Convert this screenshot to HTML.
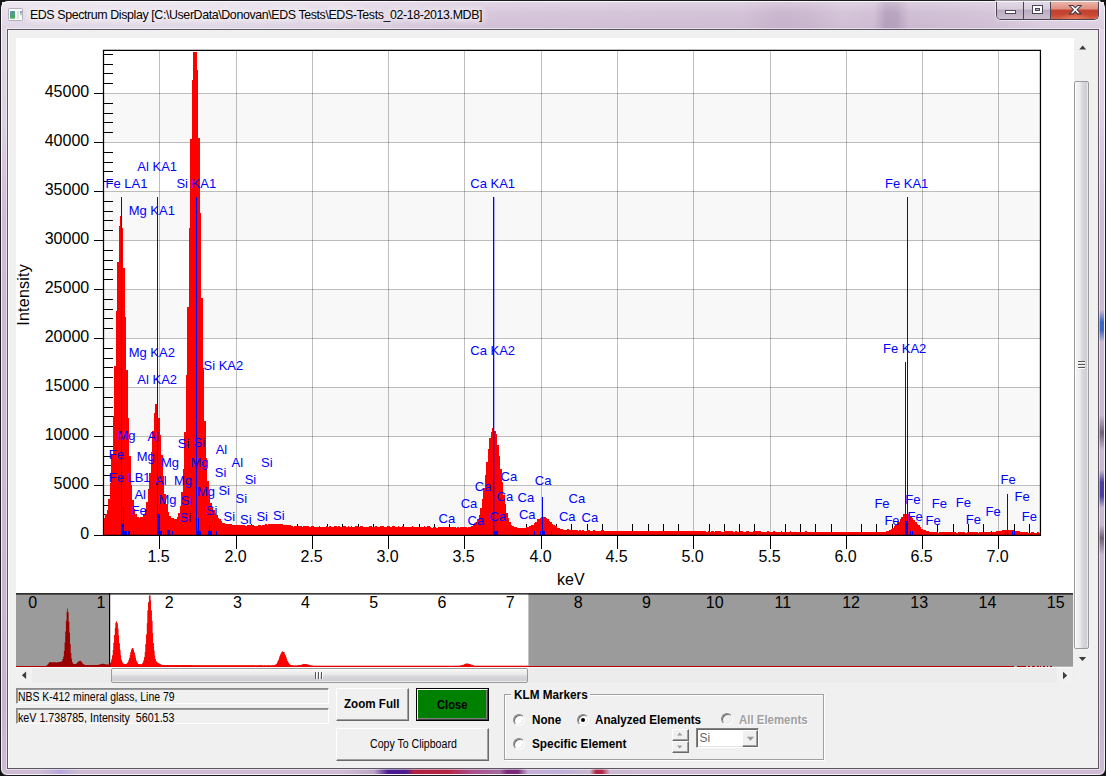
<!DOCTYPE html>
<html lang="en">
<head>
<meta charset="utf-8">
<title>EDS Spectrum Display</title>
<style>
html,body{margin:0;padding:0;}
body{width:1106px;height:776px;overflow:hidden;background:#141414;position:relative;
  font-family:"Liberation Sans",Arial,sans-serif;font-size:11px;color:#000;}
.abs{position:absolute;box-sizing:border-box;}
#frame{left:0;top:0;width:1106px;height:776px;border-radius:8px 8px 7px 7px;
  background:linear-gradient(180deg,#e3d8e7 0px,#ddd0e2 120px,#cdbbd3 220px,#cbb9d1 500px,#c6b3cc 700px,#cdbcd3 776px);
  border:1px solid #1b1a1f;overflow:hidden;}
#frame:before{content:"";position:absolute;left:0;top:0;right:0;bottom:0;border:1px solid rgba(255,255,255,.8);border-radius:7px 7px 6px 6px;z-index:3}
#tbar{left:2px;top:2px;width:1102px;height:27px;
  background:linear-gradient(90deg,#e7deea 0px,#e9e1ed 150px,#e3d8e7 330px,#d8c8dc 490px,#d4c3d8 740px,#cbb8d0 775px,#cdbbd2 808px,#d6c6da 842px,#d2c1d7 872px,#b9a4c0 884px,#bba6c2 895px,#d0bfd5 907px,#d6c6da 990px,#dfd3e3 1040px,#e2d7e6 1102px);}
#tbar:after{content:"";position:absolute;left:0;top:0;right:0;bottom:0;background:linear-gradient(180deg,rgba(255,255,255,.25) 0,rgba(255,255,255,0) 40%,rgba(90,60,100,.05) 100%);}
#rstrip{left:1099px;top:30px;width:5px;height:739px;
  background:linear-gradient(180deg,rgba(0,0,0,0) 280px,#3a66c4 292px,#3a66c4 300px,rgba(0,0,0,0) 312px,rgba(0,0,0,0) 385px,#6d6275 403px,rgba(0,0,0,0) 420px,rgba(0,0,0,0) 440px,#4a3fa0 452px,#4a3fa0 466px,rgba(0,0,0,0) 478px,rgba(0,0,0,0) 495px,#6b6170 508px,rgba(0,0,0,0) 525px);}
#bottomglow{left:2px;top:769px;width:1102px;height:5px;
  background:linear-gradient(90deg,rgba(0,0,0,0) 40px,#b4a6dc 58px,rgba(0,0,0,0) 76px,rgba(0,0,0,0) 340px,#bda6c6 372px,#4a1a90 386px,#4a1a90 404px,#b02040 412px,#b52343 446px,#a8508c 470px,#a66a9e 498px,#7a2a78 505px,#7a2a78 516px,#c4b0d4 526px,#bfb0d8 560px,#cbb9d1 588px,#b02848 594px,#b02848 600px,#cbb9d1 608px,rgba(0,0,0,0) 640px);}
#title{left:29.9px;top:6.5px;height:16px;line-height:16px;font-size:12.4px;white-space:nowrap;color:#000;letter-spacing:-0.385px;
  text-shadow:0 0 6px #fff,0 0 8px #fff,0 0 10px rgba(255,255,255,.9);}
#client{left:7px;top:29px;width:1092px;height:740px;background:#f0f0f0;border:1px solid #5d5664;box-shadow:0 0 0 1px rgba(255,255,255,.5),inset 1px 0 0 #fbfbfb;}
#pic{left:16px;top:38px;width:1058px;height:556px;background:#fff;}
svg.chart{position:absolute;left:0;top:0;}
/* caption buttons */
#cap{left:996px;top:1px;width:103px;height:19px;border:1px solid #4b4353;border-top:none;border-radius:0 0 5px 5px;overflow:hidden;
  box-shadow:0 0 0 1px rgba(255,255,255,.5);}
#cap div{position:absolute;top:0;height:18px;box-sizing:border-box;}
#bmin{left:0;width:27px;background:linear-gradient(#e4dbe7 0,#d8cddc 45%,#b9acc0 50%,#cbbfd0 100%);border-right:1px solid #4b4353;}
#bmax{left:27px;width:27px;background:linear-gradient(#e4dbe7 0,#d8cddc 45%,#b9acc0 50%,#cbbfd0 100%);border-right:1px solid #4b4353;}
#bclose{left:54px;width:47px;background:radial-gradient(ellipse 16px 7px at 50% 100%,rgba(255,150,110,.55),rgba(255,150,110,0)),linear-gradient(#ecb9ae 0,#e08e80 45%,#c2412e 50%,#c64630 75%,#d4644a 100%);}
/* scrollbars */
.sb{background:#f0f0f0;}
.thumbv{background:linear-gradient(90deg,#f6f6f6 0,#ebebec 40%,#d9d9dd 55%,#cbcbd0 100%);border:1px solid #9a9a9a;border-radius:2px;box-shadow:inset 1px 0 0 #fff,inset -1px 0 0 rgba(255,255,255,.6);}
.thumbh{background:linear-gradient(#f6f6f6 0,#ebebec 40%,#d9d9dd 55%,#cbcbd0 100%);border:1px solid #9a9a9a;border-radius:2px;box-shadow:inset 0 1px 0 #fff,inset 0 -1px 0 rgba(255,255,255,.6);}
.sunk{border:1px solid;border-color:#8a8a8a #fff #fff #8a8a8a;box-shadow:inset 1px 1px 0 #9a9a9a;background:#f0f0f0;white-space:pre;}
.btn{background:#f0f0f0;border:1px solid;border-color:#fff #696969 #696969 #fff;box-shadow:inset -1px -1px 0 #a0a0a0;text-align:center;white-space:nowrap;}
.b{font-weight:bold;}
.radio{width:12px;height:12px;border-radius:50%;background:#fff;border:1px solid;border-color:#8c8c8c #fdfdfd #fdfdfd #8c8c8c;box-shadow:inset 1px 1px 0 #6a6a6a,inset -1px -1px 0 #e6e6e6;}
.t{position:absolute;display:inline-block;white-space:pre;font-size:12px;height:14px;line-height:14px;transform-origin:0 50%;}
</style>
</head>
<body>
<div id="frame" class="abs"></div>
<div id="tbar" class="abs"></div>
<div id="rstrip" class="abs"></div>
<div id="bottomglow" class="abs"></div>
<!-- title bar -->
<svg class="abs" style="left:8px;top:8px" width="15" height="13" viewBox="0 0 15 13">
  <rect x="0.5" y="0.5" width="14" height="12" rx="0.8" fill="#fbfbfc" stroke="#b4b0bb"/>
  <defs><linearGradient id="ig" x1="0" y1="0" x2="0.6" y2="1"><stop offset="0" stop-color="#6f94c8"/><stop offset="0.45" stop-color="#4f9a8c"/><stop offset="1" stop-color="#4fae5e"/></linearGradient></defs>
  <rect x="2" y="3" width="5" height="7.7" fill="url(#ig)"/>
  <rect x="8.8" y="3" width="2.2" height="8" fill="#e2e2e2"/>
  <rect x="12" y="3" width="2" height="2.5" fill="#7fa3d3"/>
  <rect x="12" y="5.3" width="2" height="2" fill="#a9d9a0"/>
</svg>
<div id="title" class="abs">EDS Spectrum Display [C:\UserData\Donovan\EDS Tests\EDS-Tests_02-18-2013.MDB]</div>
<div id="cap" class="abs">
  <div id="bmin"><svg width="26" height="18"><rect x="8.5" y="9.5" width="10" height="3" fill="#fff" stroke="#4a4458"/></svg></div>
  <div id="bmax"><svg width="26" height="18"><rect x="8.5" y="4.5" width="10" height="8" fill="#fff" stroke="#4a4458"/><rect x="11.5" y="7.5" width="4" height="2" fill="#b9acc0" stroke="#4a4458"/></svg></div>
  <div id="bclose"><svg width="47" height="18"><path d="M18.5 4.5h3.6l2.2 2.3 2.2-2.3h3.6l-3.9 4.2 3.9 4.2h-3.6l-2.2-2.3-2.2 2.3h-3.6l3.9-4.2z" fill="#fff" stroke="#4a3a48" stroke-width="1.1"/></svg></div>
</div>
<div id="client" class="abs"></div>
<div id="pic" class="abs"></div>
<svg class="chart" width="1106" height="776" viewBox="0 0 1106 776">
<rect x="103.5" y="485.5" width="936.95" height="49" fill="#f8f8f8"/>
<rect x="103.5" y="387.5" width="936.95" height="49" fill="#f8f8f8"/>
<rect x="103.5" y="289.5" width="936.95" height="49" fill="#f8f8f8"/>
<rect x="103.5" y="191.5" width="936.95" height="49" fill="#f8f8f8"/>
<rect x="103.5" y="93.5" width="936.95" height="49" fill="#f8f8f8"/>
<path d="M103.5 485.5H1040.45M103.5 436.5H1040.45M103.5 387.5H1040.45M103.5 338.5H1040.45M103.5 289.5H1040.45M103.5 240.5H1040.45M103.5 191.5H1040.45M103.5 142.5H1040.45M103.5 93.5H1040.45" stroke="#000" stroke-opacity="0.25" stroke-width="1" fill="none" shape-rendering="crispEdges"/>
<path d="M159.5 50.4V535.35M236.5 50.4V535.35M312.5 50.4V535.35M388.5 50.4V535.35M464.5 50.4V535.35M541.5 50.4V535.35M617.5 50.4V535.35M693.5 50.4V535.35M770.5 50.4V535.35M846.5 50.4V535.35M922.5 50.4V535.35M998.5 50.4V535.35" stroke="#000" stroke-opacity="0.25" stroke-width="1" fill="none" shape-rendering="crispEdges"/>
<path d="M94 535.5H103.5M103.5 524.5H113M103.5 514.5H113M103.5 505.5H113M103.5 495.5H113M94 485.5H103.5M103.5 475.5H113M103.5 465.5H113M103.5 456.5H113M103.5 446.5H113M94 436.5H103.5M103.5 426.5H113M103.5 416.5H113M103.5 407.5H113M103.5 397.5H113M94 387.5H103.5M103.5 377.5H113M103.5 367.5H113M103.5 358.5H113M103.5 348.5H113M94 338.5H103.5M103.5 328.5H113M103.5 318.5H113M103.5 309.5H113M103.5 299.5H113M94 289.5H103.5M103.5 279.5H113M103.5 269.5H113M103.5 260.5H113M103.5 250.5H113M94 240.5H103.5M103.5 230.5H113M103.5 220.5H113M103.5 211.5H113M103.5 201.5H113M94 191.5H103.5M103.5 181.5H113M103.5 171.5H113M103.5 162.5H113M103.5 152.5H113M94 142.5H103.5M103.5 132.5H113M103.5 122.5H113M103.5 113.5H113M103.5 103.5H113M94 93.5H103.5M103.5 83.5H113M103.5 73.5H113M103.5 64.5H113M103.5 54.5H113M114.5 535.35V524M129.5 535.35V524M144.5 535.35V524M159.5 535.35V549M175.5 535.35V524M190.5 535.35V524M205.5 535.35V524M220.5 535.35V524M236.5 535.35V549M251.5 535.35V524M266.5 535.35V524M281.5 535.35V524M297.5 535.35V524M312.5 535.35V549M327.5 535.35V524M342.5 535.35V524M358.5 535.35V524M373.5 535.35V524M388.5 535.35V549M403.5 535.35V524M419.5 535.35V524M434.5 535.35V524M449.5 535.35V524M464.5 535.35V549M480.5 535.35V524M495.5 535.35V524M510.5 535.35V524M526.5 535.35V524M541.5 535.35V549M556.5 535.35V524M571.5 535.35V524M587.5 535.35V524M602.5 535.35V524M617.5 535.35V549M632.5 535.35V524M648.5 535.35V524M663.5 535.35V524M678.5 535.35V524M693.5 535.35V549M709.5 535.35V524M724.5 535.35V524M739.5 535.35V524M754.5 535.35V524M770.5 535.35V549M785.5 535.35V524M800.5 535.35V524M815.5 535.35V524M831.5 535.35V524M846.5 535.35V549M861.5 535.35V524M876.5 535.35V524M892.5 535.35V524M907.5 535.35V524M922.5 535.35V549M937.5 535.35V524M953.5 535.35V524M968.5 535.35V524M983.5 535.35V524M998.5 535.35V549M1014.5 535.35V524M1029.5 535.35V524" stroke="#000" stroke-width="1" fill="none" shape-rendering="crispEdges"/>
<path d="M103.5 535.85V50.4H1040.45V535.85" stroke="#000" stroke-width="1.25" fill="none"/>
<path d="M104 534.9V517.92H104.98V514.49H106.51V509.86H108.03V499.29H109.56V482.52H111.09V455.44H112.61V416.38H114.14V366H115.66V311.23H117.19V261.99H118.71V225.87H120.24V216.2H121.76V227.93H123.29V268.06H124.81V316.52H126.34V369.73H127.87V418.28H129.39V456.18H130.92V485.31H132.44V500.3H133.97V509.44H135.49V514.35H137.02V517.37H138.54V517.64H140.07V517H141.59V517.47H143.12V514.34H144.65V509.39H146.17V502.27H147.7V488.95H149.22V472.99H150.75V452.3H152.27V431.41H153.8V413.21H155.32V404.3H156.85V404.24H158.37V417.51H159.9V435.01H161.43V455.34H162.95V475.95H164.48V493.63H166V504.09H167.53V512.05H169.05V515.8H170.58V517.89H172.1V518.34H173.63V518.84H175.15V519.05H176.68V517.29H178.21V512.9H179.73V506.26H181.26V491.85H182.78V468.71H184.31V431.99H185.83V375.44H187.36V307.28H188.88V228.15H190.41V139.05H191.93V80.02H193.46V52.1H194.99V52.1H196.51V69.93H198.04V138H199.56V212.84H201.09V297.82H202.61V368.01H204.14V421.12H205.66V457.56H207.19V481.36H208.71V494.42H210.24V502.54H211.77V506.73H213.29V510.33H214.82V512.66H216.34V514.84H217.87V517.62H219.39V519.37H220.92V521.41H222.44V522.62H223.97V523.26H225.49V523.92H227.02V524.06H228.55V524.45H230.07V524.15H231.6V524.92H233.12V525.05H234.65V525.42H236.17V525.17H237.7V525H239.22V525.48H240.75V525.3H242.27V525.09H243.8V525.38H245.33V525.52H246.85V525.09H248.38V525.38H249.9V525.3H251.43V525.08H252.95V525.08H254.48V525.51H256V525.53H257.53V525.22H259.05V525.25H260.58V525.67H262.11V524.53H263.63V524.73H265.16V524.29H266.68V524.69H268.21V523.68H269.73V524.1H271.26V523.79H272.78V524.13H274.31V523.7H275.83V523.77H277.36V523.88H278.89V523.86H280.41V524.21H281.94V524.18H283.46V524.92H284.99V525.35H286.51V525.3H288.04V525.33H289.56V525.35H291.09V525.64H292.61V526.54H294.14V526.01H295.67V525.78H297.19V526.26H298.72V526.48H300.24V526.28H301.77V526.56H303.29V526.26H304.82V526.48H306.34V526.11H307.87V526.4H309.39V526.78H310.92V526.43H312.45V526.35H313.97V526.77H315.5V526.73H317.02V527.26H318.55V526.34H320.07V526.76H321.6V527.19H323.12V527.09H324.65V526.64H326.17V526.35H327.7V526.59H329.22V526.43H330.75V526.87H332.28V526.94H333.8V526.29H335.33V526.4H336.85V526.55H338.38V526.17H339.9V526.8H341.43V526.64H342.95V526.22H344.48V525.99H346V526.51H347.53V526.02H349.06V526.67H350.58V526.4H352.11V526.54H353.63V526.94H355.16V526.41H356.68V526.21H358.21V526.51H359.73V526.48H361.26V526.06H362.78V526.81H364.31V526.88H365.84V526.63H367.36V526.78H368.89V526.05H370.41V526.34H371.94V526.67H373.46V526.6H374.99V525.59H376.51V526.59H378.04V526.63H379.56V526.31H381.09V526.21H382.62V526.33H384.14V526.65H385.67V526.72H387.19V526.2H388.72V526.4H390.24V526.88H391.77V526.09H393.29V526.22H394.82V526.54H396.34V526.56H397.87V526.44H399.4V526.73H400.92V526.93H402.45V526.48H403.97V527H405.5V526.5H407.02V527.04H408.55V526.68H410.07V526.71H411.6V526.19H413.12V527.02H414.65V527.13H416.18V526.94H417.7V527.09H419.23V526.96H420.75V526.7H422.28V526.62H423.8V526.39H425.33V527.08H426.85V526.16H428.38V526.36H429.9V527H431.43V527.6H432.96V527H434.48V526.98H436.01V527.66H437.53V527.02H439.06V527.12H440.58V527.3H442.11V526.93H443.63V526.84H445.16V527.27H446.68V527.09H448.21V527.35H449.74V527.4H451.26V527.18H452.79V527.07H454.31V527.37H455.84V527.83H457.36V527.07H458.89V527.67H460.41V527.19H461.94V526.72H463.46V527.2H464.99V527.49H466.52V527.5H468.04V526.66H469.57V526.77H471.09V526.2H472.62V525.33H474.14V524.34H475.67V522.34H477.19V519.32H478.72V515.49H480.24V508.14H481.77V498.53H483.3V487.71H484.82V474.79H486.35V461.97H487.87V448.97H489.4V437.51H490.92V431.59H492.45V427.7H493.97V430.51H495.5V433.93H497.02V444.6H498.55V456.43H500.08V468.89H501.6V482.32H503.13V494.8H504.65V504.1H506.18V512.85H507.7V517.62H509.23V521.67H510.75V524.83H512.28V525.53H513.8V527.11H515.33V527.3H516.86V527.91H518.38V527.72H519.91V527.7H521.43V528.25H522.96V528.33H524.48V527.75H526.01V527.13H527.53V526.95H529.06V526.29H530.58V524.99H532.11V524.84H533.64V522.79H535.16V521.58H536.69V519.48H538.21V518.57H539.74V517.71H541.26V516.79H542.79V517.16H544.31V516.96H545.84V518.13H547.36V519.27H548.89V520.9H550.42V521.92H551.94V523.85H553.47V525.08H554.99V526.33H556.52V527.69H558.04V528.09H559.57V528.73H561.09V529.15H562.62V529.6H564.14V529.81H565.67V529.68H567.2V529.49H568.72V530.23H570.25V530.01H571.77V530.25H573.3V530.03H574.82V530.13H576.35V530.02H577.87V530.87H579.4V530.42H580.92V530.53H582.45V530.36H583.98V530.51H585.5V530.52H587.03V530.26H588.55V530.03H590.08V531.04H591.6V530.53H593.13V530.42H594.65V530.51H596.18V530.6H597.7V530.83H599.23V530.76H600.76V530.44H602.28V530.39H603.81V530.61H605.33V530.82H606.86V530.65H608.38V530.74H609.91V530.6H611.43V530.71H612.96V530.88H614.48V530.73H616.01V531.03H617.54V530.64H619.06V530.58H620.59V531.06H622.11V530.75H623.64V531.03H625.16V530.63H626.69V530.67H628.21V530.91H629.74V530.67H631.26V530.96H632.79V531.01H634.31V531H635.84V530.92H637.37V530.97H638.89V530.88H640.42V531.04H641.94V530.78H643.47V530.73H644.99V531.04H646.52V531.23H648.04V530.81H649.57V530.74H651.09V531H652.62V531.23H654.15V530.93H655.67V530.7H657.2V531.37H658.72V530.92H660.25V531.08H661.77V531.19H663.3V530.93H664.82V531.29H666.35V530.99H667.87V530.8H669.4V531.03H670.93V531.24H672.45V531.42H673.98V531.33H675.5V531.45H677.03V530.79H678.55V531.15H680.08V531.31H681.6V531.37H683.13V531.33H684.65V531.2H686.18V531.39H687.71V530.83H689.23V531.3H690.76V531.31H692.28V531.11H693.81V530.9H695.33V530.94H696.86V531.29H698.38V531.16H699.91V531.19H701.43V531.13H702.96V531.19H704.49V531.43H706.01V531.5H707.54V531.24H709.06V531.5H710.59V531.03H712.11V531.29H713.64V531.5H715.16V531.38H716.69V531.42H718.21V531.36H719.74V531.17H721.27V531.63H722.79V531.71H724.32V531.31H725.84V531.42H727.37V531.37H728.89V531.32H730.42V531.45H731.94V531.28H733.47V531.6H734.99V531.43H736.52V531.61H738.05V531.67H739.57V531.36H741.1V531.38H742.62V531.85H744.15V531.71H745.67V531.46H747.2V531.33H748.72V531.65H750.25V531.58H751.77V531.81H753.3V531.11H754.83V531.49H756.35V531.42H757.88V531.47H759.4V531.43H760.93V531.5H762.45V531.68H763.98V531.5H765.5V531.63H767.03V531.42H768.55V531.79H770.08V531.77H771.61V531.56H773.13V531.45H774.66V531.66H776.18V531.82H777.71V531.72H779.23V531.79H780.76V531.37H782.28V531.56H783.81V531.5H785.33V531.67H786.86V531.83H788.39V531.53H789.91V531.45H791.44V531.65H792.96V531.76H794.49V531.57H796.01V531.83H797.54V531.64H799.06V531.91H800.59V531.96H802.11V531.69H803.64V531.74H805.17V531.47H806.69V531.86H808.22V531.81H809.74V532.02H811.27V532.15H812.79V532.14H814.32V531.76H815.84V532.05H817.37V531.66H818.89V531.61H820.42V531.91H821.95V531.58H823.47V531.84H825V531.69H826.52V531.93H828.05V531.73H829.57V532.06H831.1V531.8H832.62V531.99H834.15V531.94H835.67V531.81H837.2V531.9H838.73V531.95H840.25V531.82H841.78V531.81H843.3V532.19H844.83V531.86H846.35V531.85H847.88V532.09H849.4V531.91H850.93V532.2H852.45V531.74H853.98V532.02H855.51V532H857.03V531.79H858.56V532.02H860.08V531.9H861.61V532.18H863.13V532.1H864.66V532.24H866.18V532.04H867.71V531.84H869.23V531.97H870.76V531.86H872.29V532.18H873.81V532.15H875.34V532.07H876.86V531.88H878.39V531.89H879.91V531.91H881.44V531.72H882.96V531.72H884.49V531.5H886.01V530.93H887.54V530.83H889.07V530.01H890.59V528.77H892.12V527.95H893.64V526.31H895.17V524.97H896.69V522.15H898.22V521.58H899.74V519.11H901.27V517.18H902.79V514.44H904.32V513.89H905.85V513.66H907.37V514.26H908.9V514.28H910.42V515.72H911.95V517.8H913.47V520.1H915V522.03H916.52V523.62H918.05V525.49H919.57V527.2H921.1V528.61H922.63V530.05H924.15V530.44H925.68V531.24H927.2V531.44H928.73V531.65H930.25V532.03H931.78V532.2H933.3V531.94H934.83V532.09H936.35V532.28H937.88V532.69H939.4V532.23H940.93V532.13H942.46V532.06H943.98V532.36H945.51V532.36H947.03V532.34H948.56V532.14H950.08V532.47H951.61V532.31H953.13V532.45H954.66V532.26H956.18V532.56H957.71V532.26H959.24V532.4H960.76V532.36H962.29V532.25H963.81V532.15H965.34V532.61H966.86V532.19H968.39V532.26H969.91V532.4H971.44V532.14H972.96V532.33H974.49V532.16H976.02V532.46H977.54V532.5H979.07V532.16H980.59V532H982.12V532.23H983.64V532.16H985.17V532.33H986.69V532.41H988.22V532.15H989.74V531.75H991.27V532.18H992.8V531.78H994.32V531.84H995.85V531.24H997.37V530.85H998.9V531.03H1000.42V530.63H1001.95V530.05H1003.47V530.18H1005V530.32H1006.52V530.29H1008.05V530.46H1009.58V529.94H1011.1V530.41H1012.63V530.23H1014.15V530.51H1015.68V531.06H1017.2V531.29H1018.73V531.29H1020.25V531.63H1021.78V531.81H1023.3V532.3H1024.83V532.02H1026.36V532.41H1027.88V532.71H1029.41V532.52H1030.93V532.4H1032.46V532.18H1033.98V532.58H1035.51V532.74H1037.03V532.23H1038.56V532.54H1039.95V532.61H1039.95V534.9Z" fill="#ff0000" shape-rendering="crispEdges"/>
<g fill="#0000ff">
<rect x="121" y="197" width="1" height="337.9"/>
<rect x="157" y="197" width="1" height="337.9"/>
<rect x="196" y="197" width="1" height="337.9"/>
<rect x="493" y="197" width="1.3" height="337.9"/>
<rect x="907" y="197" width="1" height="337.9"/>
<rect x="905" y="362" width="1" height="172.9"/>
<rect x="542" y="497" width="1" height="37.9"/>
<rect x="1007" y="494" width="1" height="40.9"/>
</g>
<g fill="#0000ff" shape-rendering="crispEdges">
<rect x="122" y="524.2" width="1.1" height="10.7"/>
<rect x="123.1" y="506.8" width="0.8" height="28.1"/>
<rect x="123.9" y="531" width="2.7" height="3.9"/>
<rect x="128.4" y="531" width="1.1" height="3.9"/>
<rect x="132.9" y="531" width="0.9" height="3.9"/>
<rect x="157.8" y="514.1" width="2.1" height="20.8"/>
<rect x="159.9" y="531" width="1.9" height="3.9"/>
<rect x="165.1" y="531" width="0.9" height="3.9"/>
<rect x="167.3" y="530.4" width="2.7" height="4.5"/>
<rect x="171.6" y="531" width="1.3" height="3.9"/>
<rect x="196.9" y="531" width="4" height="3.9"/>
<rect x="198.2" y="518" width="0.9" height="16.9"/>
<rect x="208" y="531" width="4" height="3.9"/>
<rect x="209.4" y="525.3" width="0.9" height="9.6"/>
<rect x="216.1" y="531" width="0.9" height="3.9"/>
<rect x="493.2" y="531.3" width="4.6" height="3.6"/>
<rect x="533.6" y="531" width="1" height="3.9"/>
<rect x="539.6" y="531" width="1.2" height="3.9"/>
<rect x="541.5" y="531" width="3.3" height="3.9"/>
<rect x="551.1" y="531" width="1" height="3.9"/>
<rect x="906.4" y="521" width="0.9" height="13.9"/>
<rect x="909.8" y="531.3" width="1.2" height="3.6"/>
<rect x="911.6" y="531.3" width="1.4" height="3.6"/>
<rect x="991" y="531.3" width="1" height="3.6"/>
<rect x="1005.2" y="531.3" width="1" height="3.6"/>
<rect x="1012.2" y="531.3" width="1.1" height="3.6"/>
<rect x="1013.9" y="531.3" width="1.1" height="3.6"/>
</g>
<path d="M102.9 535.35H1041.05" stroke="#000" stroke-width="1.1" fill="none"/>
<g font-family="Liberation Sans, Arial, sans-serif" font-size="16" fill="#000">
<text x="89.2" y="538.9" text-anchor="end">0</text>
<text x="89.2" y="488.9" text-anchor="end">5000</text>
<text x="89.2" y="439.9" text-anchor="end">10000</text>
<text x="89.2" y="390.9" text-anchor="end">15000</text>
<text x="89.2" y="341.9" text-anchor="end">20000</text>
<text x="89.2" y="292.9" text-anchor="end">25000</text>
<text x="89.2" y="243.9" text-anchor="end">30000</text>
<text x="89.2" y="194.9" text-anchor="end">35000</text>
<text x="89.2" y="145.9" text-anchor="end">40000</text>
<text x="89.2" y="96.9" text-anchor="end">45000</text>
<text x="158.6" y="561.7" text-anchor="middle">1.5</text>
<text x="235.6" y="561.7" text-anchor="middle">2.0</text>
<text x="311.6" y="561.7" text-anchor="middle">2.5</text>
<text x="387.6" y="561.7" text-anchor="middle">3.0</text>
<text x="463.6" y="561.7" text-anchor="middle">3.5</text>
<text x="540.6" y="561.7" text-anchor="middle">4.0</text>
<text x="616.6" y="561.7" text-anchor="middle">4.5</text>
<text x="692.6" y="561.7" text-anchor="middle">5.0</text>
<text x="769.6" y="561.7" text-anchor="middle">5.5</text>
<text x="845.6" y="561.7" text-anchor="middle">6.0</text>
<text x="921.6" y="561.7" text-anchor="middle">6.5</text>
<text x="997.6" y="561.7" text-anchor="middle">7.0</text>
<text x="570.8" y="584.7" text-anchor="middle">keV</text>
<text transform="translate(29.1 294.9) rotate(-90)" text-anchor="middle" letter-spacing="0.22">Intensity</text>
</g>
<g font-family="Liberation Sans, Arial, sans-serif" font-size="13" fill="#0000ff">
<text x="137.3" y="170.7">Al KA1</text>
<text x="105.5" y="187.6">Fe LA1</text>
<text x="176.4" y="187.6">Si KA1</text>
<text x="128.7" y="214.7">Mg KA1</text>
<text x="470.3" y="187.6">Ca KA1</text>
<text x="885" y="187.6">Fe KA1</text>
<text x="128.7" y="357">Mg KA2</text>
<text x="137.3" y="384">Al KA2</text>
<text x="203.5" y="370">Si KA2</text>
<text x="470.3" y="355">Ca KA2</text>
<text x="883" y="353">Fe KA2</text>
<text x="117.5" y="440">Mg</text>
<text x="147.4" y="441">Al</text>
<text x="177.8" y="448">Si</text>
<text x="193.5" y="447">Si</text>
<text x="215.7" y="454.4">Al</text>
<text x="108.7" y="459">Fe</text>
<text x="136.7" y="461">Mg</text>
<text x="161" y="467">Mg</text>
<text x="190.4" y="467">Mg</text>
<text x="231.5" y="466.7">Al</text>
<text x="261" y="466.7">Si</text>
<text x="214.8" y="477">Si</text>
<text x="108.7" y="482.4">Fe LB1</text>
<text x="155" y="485">Al</text>
<text x="174" y="484.7">Mg</text>
<text x="244.7" y="484.4">Si</text>
<text x="134.4" y="498.5">Al</text>
<text x="197" y="496">Mg</text>
<text x="218.4" y="495">Si</text>
<text x="158.4" y="503.5">Mg</text>
<text x="180.8" y="505">Si</text>
<text x="235.6" y="503">Si</text>
<text x="131.6" y="515.3">Fe</text>
<text x="205.8" y="515.3">Si</text>
<text x="179.6" y="521.8">Si</text>
<text x="223.5" y="520.5">Si</text>
<text x="240" y="524">Si</text>
<text x="256.4" y="520.5">Si</text>
<text x="273" y="520">Si</text>
<text x="438.6" y="523">Ca</text>
<text x="460.7" y="508.1">Ca</text>
<text x="467.6" y="525.1">Ca</text>
<text x="474.8" y="491.3">Ca</text>
<text x="489.6" y="520.8">Ca</text>
<text x="500.5" y="481.4">Ca</text>
<text x="496.5" y="501.3">Ca</text>
<text x="517.6" y="502.2">Ca</text>
<text x="518.9" y="519.3">Ca</text>
<text x="534.8" y="485">Ca</text>
<text x="558.9" y="520.8">Ca</text>
<text x="568.6" y="503">Ca</text>
<text x="581.5" y="522">Ca</text>
<text x="874.4" y="508.4">Fe</text>
<text x="884.4" y="525">Fe</text>
<text x="905.2" y="504.2">Fe</text>
<text x="907.5" y="521.4">Fe</text>
<text x="925.6" y="525">Fe</text>
<text x="931.7" y="508.4">Fe</text>
<text x="955.8" y="507.3">Fe</text>
<text x="965.7" y="524">Fe</text>
<text x="985.6" y="516">Fe</text>
<text x="1000.6" y="484.3">Fe</text>
<text x="1014.6" y="501.1">Fe</text>
<text x="1021.8" y="520.8">Fe</text>
</g>
<rect x="16" y="593.3" width="1057" height="73.4" fill="#9b9b9b"/>
<rect x="109.6" y="593.3" width="418.8" height="73.4" fill="#fff"/>
<clipPath id="cw"><rect x="109.6" y="593.3" width="418.8" height="80"/></clipPath>
<path d="M16 666.7V666.7H15.57V666.7H16.25V666.7H16.93V666.7H17.61V666.7H18.29V666.7H18.97V666.7H19.65V666.7H20.33V666.7H21.01V666.7H21.69V666.7H22.37V666.7H23.05V666.7H23.73V666.7H24.41V666.7H25.1V666.7H25.78V666.7H26.46V666.7H27.14V666.7H27.82V666.7H28.5V666.7H29.18V666.7H29.86V666.7H30.54V666.7H31.22V666.7H31.9V666.7H32.58V666.7H33.26V666.7H33.94V666.7H34.62V666.7H35.3V666.7H35.98V666.7H36.66V666.7H37.34V666.7H38.02V666.7H38.71V666.7H39.39V666.7H40.07V666.7H40.75V666.7H41.43V666.7H42.11V666.7H42.79V666.7H43.47V666.7H44.15V666.7H44.83V666.7H45.51V666.46H46.19V665.85H46.87V664.92H47.55V664.18H48.23V663.4H48.91V662.59H49.59V662.3H50.27V662.12H50.95V662.14H51.63V662.2H52.32V662.24H53V662.36H53.68V662.24H54.36V662.31H55.04V662.24H55.72V662.39H56.4V662.48H57.08V662.27H57.76V662.05H58.44V662.13H59.12V662.08H59.8V661.99H60.48V661.81H61.16V661.41H61.84V660.77H62.52V659.08H63.2V656.39H63.88V651H64.56V642.43H65.24V631.59H65.93V620.7H66.61V611.86H67.29V608.57H67.97V612.35H68.65V621.79H69.33V632.87H70.01V644.07H70.69V652.95H71.37V658.82H72.05V661.9H72.73V663.46H73.41V664.08H74.09V664.17H74.77V664.09H75.45V663.88H76.13V663.43H76.81V662.79H77.49V662.1H78.17V661.4H78.85V660.94H79.54V660.72H80.22V660.75H80.9V661.46H81.58V662.34H82.26V663.16H82.94V663.89H83.62V664.36H84.3V664.73H84.98V665.03H85.66V665.04H86.34V665.13H87.02V665.06H87.7V665.12H88.38V665.05H89.06V665.15H89.74V665.13H90.42V665.1H91.1V665.06H91.78V665.08H92.46V665.16H93.15V665.08H93.83V665.06H94.51V665.06H95.19V665.04H95.87V664.9H96.55V664.96H97.23V664.93H97.91V664.77H98.59V664.68H99.27V664.53H99.95V664.29H100.63V664.09H101.31V663.92H101.99V663.75H102.67V663.76H103.35V663.87H104.03V663.97H104.71V664.13H105.39V664.23H106.07V664.41H106.76V664.5H107.44V664.39H108.12V664.41H108.8V664.29H109.48V663.8H110.16V663.15H110.84V661.65H111.52V659.27H112.2V655.43H112.88V649.88H113.56V642.73H114.24V634.96H114.92V627.98H115.6V622.85H116.28V621.48H116.96V623.14H117.64V628.84H118.32V635.71H119V643.26H119.68V650.15H120.37V655.53H121.05V659.66H121.73V661.79H122.41V663.09H123.09V663.78H123.77V664.21H124.45V664.25H125.13V664.16H125.81V664.23H126.49V663.78H127.17V663.08H127.85V662.07H128.53V660.18H129.21V657.92H129.89V654.98H130.57V652.02H131.25V649.43H131.93V648.17H132.61V648.16H133.29V650.04H133.98V652.53H134.66V655.41H135.34V658.34H136.02V660.84H136.7V662.33H137.38V663.46H138.06V663.99H138.74V664.29H139.42V664.35H140.1V664.42H140.78V664.45H141.46V664.2H142.14V663.58H142.82V662.64H143.5V660.59H144.18V657.31H144.86V652.1H145.54V644.07H146.22V634.4H146.9V623.17H147.59V610.53H148.27V602.16H148.95V595.86H149.63V595.47H150.31V600.72H150.99V610.38H151.67V621H152.35V633.06H153.03V643.02H153.71V650.56H154.39V655.73H155.07V659.1H155.75V660.96H156.43V662.11H157.11V662.7H157.79V663.21H158.47V663.54H159.15V663.85H159.83V664.25H160.51V664.5H161.2V664.79H161.88V664.96H162.56V665.05H163.24V665.14H163.92V665.16H164.6V665.22H165.28V665.18H165.96V665.28H166.64V665.3H167.32V665.36H168V665.32H168.68V665.3H169.36V665.36H170.04V665.34H170.72V665.31H171.4V665.35H172.08V665.37H172.76V665.31H173.44V665.35H174.12V665.34H174.81V665.31H175.49V665.31H176.17V665.37H176.85V665.37H177.53V665.33H178.21V665.33H178.89V665.39H179.57V665.23H180.25V665.26H180.93V665.2H181.61V665.25H182.29V665.11H182.97V665.17H183.65V665.12H184.33V665.17H185.01V665.11H185.69V665.12H186.37V665.14H187.05V665.13H187.73V665.18H188.42V665.18H189.1V665.28H189.78V665.35H190.46V665.34H191.14V665.34H191.82V665.34H192.5V665.39H193.18V665.51H193.86V665.44H194.54V665.41H195.22V665.47H195.9V665.5H196.58V665.48H197.26V665.52H197.94V665.47H198.62V665.51H199.3V665.45H199.98V665.49H200.66V665.55H201.34V665.5H202.03V665.49H202.71V665.55H203.39V665.54H204.07V665.62H204.75V665.49H205.43V665.54H206.11V665.61H206.79V665.59H207.47V665.53H208.15V665.49H208.83V665.52H209.51V665.5H210.19V665.56H210.87V665.57H211.55V665.48H212.23V665.49H212.91V665.51H213.59V665.46H214.27V665.55H214.95V665.53H215.64V665.47H216.32V665.44H217V665.51H217.68V665.44H218.36V665.53H219.04V665.49H219.72V665.51H220.4V665.57H221.08V665.49H221.76V665.47H222.44V665.51H223.12V665.51H223.8V665.45H224.48V665.55H225.16V665.56H225.84V665.53H226.52V665.55H227.2V665.44H227.88V665.49H228.56V665.53H229.25V665.52H229.93V665.38H230.61V665.52H231.29V665.53H231.97V665.48H232.65V665.47H233.33V665.48H234.01V665.53H234.69V665.54H235.37V665.47H236.05V665.49H236.73V665.56H237.41V665.45H238.09V665.47H238.77V665.51H239.45V665.52H240.13V665.5H240.81V665.54H241.49V665.57H242.17V665.5H242.86V665.58H243.54V665.51H244.22V665.58H244.9V665.53H245.58V665.54H246.26V665.46H246.94V665.58H247.62V665.6H248.3V665.57H248.98V665.59H249.66V665.57H250.34V665.54H251.02V665.53H251.7V665.49H252.38V665.59H253.06V665.46H253.74V665.49H254.42V665.58H255.1V665.66H255.78V665.58H256.47V665.58H257.15V665.67H257.83V665.58H258.51V665.6H259.19V665.62H259.87V665.57H260.55V665.56H261.23V665.62H261.91V665.59H262.59V665.63H263.27V665.64H263.95V665.6H264.63V665.59H265.31V665.63H265.99V665.7H266.67V665.59H267.35V665.67H268.03V665.61H268.71V665.54H269.39V665.61H270.08V665.65H270.76V665.65H271.44V665.53H272.12V665.55H272.8V665.46H273.48V665.34H274.16V665.2H274.84V664.92H275.52V664.49H276.2V663.95H276.88V662.9H277.56V661.54H278.24V660H278.92V658.17H279.6V656.35H280.28V654.51H280.96V652.88H281.64V652.04H282.32V651.49H283V651.89H283.69V652.37H284.37V653.89H285.05V655.57H285.73V657.33H286.41V659.24H287.09V661.01H287.77V662.33H288.45V663.57H289.13V664.25H289.81V664.82H290.49V665.27H291.17V665.37H291.85V665.59H292.53V665.62H293.21V665.71H293.89V665.68H294.57V665.68H295.25V665.76H295.93V665.77H296.61V665.69H297.3V665.6H297.98V665.57H298.66V665.48H299.34V665.29H300.02V665.27H300.7V664.98H301.38V664.81H302.06V664.51H302.74V664.38H303.42V664.26H304.1V664.13H304.78V664.18H305.46V664.15H306.14V664.32H306.82V664.48H307.5V664.71H308.18V664.86H308.86V665.13H309.54V665.31H310.22V665.48H310.91V665.68H311.59V665.73H312.27V665.82H312.95V665.88H313.63V665.95H314.31V665.98H314.99V665.96H315.67V665.93H316.35V666.04H317.03V666.01H317.71V666.04H318.39V666.01H319.07V666.02H319.75V666.01H320.43V666.13H321.11V666.06H321.79V666.08H322.47V666.06H323.15V666.08H323.83V666.08H324.52V666.04H325.2V666.01H325.88V666.15H326.56V666.08H327.24V666.06H327.92V666.08H328.6V666.09H329.28V666.12H329.96V666.11H330.64V666.07H331.32V666.06H332V666.09H332.68V666.12H333.36V666.1H334.04V666.11H334.72V666.09H335.4V666.11H336.08V666.13H336.76V666.11H337.44V666.15H338.13V666.1H338.81V666.09H339.49V666.15H340.17V666.11H340.85V666.15H341.53V666.09H342.21V666.1H342.89V666.13H343.57V666.1H344.25V666.14H344.93V666.15H345.61V666.15H346.29V666.14H346.97V666.14H347.65V666.13H348.33V666.15H349.01V666.11H349.69V666.11H350.37V666.15H351.05V666.18H351.74V666.12H352.42V666.11H353.1V666.15H353.78V666.18H354.46V666.14H355.14V666.1H355.82V666.2H356.5V666.13H357.18V666.16H357.86V666.17H358.54V666.14H359.22V666.19H359.9V666.14H360.58V666.12H361.26V666.15H361.94V666.18H362.62V666.21H363.3V666.19H363.98V666.21H364.66V666.12H365.35V666.17H366.03V666.19H366.71V666.2H367.39V666.19H368.07V666.17H368.75V666.2H369.43V666.12H370.11V666.19H370.79V666.19H371.47V666.16H372.15V666.13H372.83V666.14H373.51V666.19H374.19V666.17H374.87V666.17H375.55V666.16H376.23V666.17H376.91V666.21H377.59V666.22H378.27V666.18H378.96V666.22H379.64V666.15H380.32V666.19H381V666.22H381.68V666.2H382.36V666.21H383.04V666.2H383.72V666.17H384.4V666.24H385.08V666.25H385.76V666.19H386.44V666.21H387.12V666.2H387.8V666.19H388.48V666.21H389.16V666.19H389.84V666.23H390.52V666.21H391.2V666.23H391.88V666.24H392.57V666.2H393.25V666.2H393.93V666.27H394.61V666.25H395.29V666.21H395.97V666.19H396.65V666.24H397.33V666.23H398.01V666.26H398.69V666.16H399.37V666.22H400.05V666.21H400.73V666.21H401.41V666.21H402.09V666.22H402.77V666.24H403.45V666.22H404.13V666.24H404.81V666.21H405.49V666.26H406.18V666.26H406.86V666.23H407.54V666.21H408.22V666.24H408.9V666.26H409.58V666.25H410.26V666.26H410.94V666.2H411.62V666.23H412.3V666.22H412.98V666.24H413.66V666.26H414.34V666.22H415.02V666.21H415.7V666.24H416.38V666.25H417.06V666.23H417.74V666.26H418.42V666.24H419.1V666.28H419.79V666.28H420.47V666.25H421.15V666.25H421.83V666.21H422.51V666.27H423.19V666.26H423.87V666.29H424.55V666.31H425.23V666.31H425.91V666.25H426.59V666.3H427.27V666.24H427.95V666.23H428.63V666.28H429.31V666.23H429.99V666.27H430.67V666.24H431.35V666.28H432.03V666.25H432.71V666.3H433.4V666.26H434.08V666.29H434.76V666.28H435.44V666.26H436.12V666.27H436.8V666.28H437.48V666.26H438.16V666.26H438.84V666.31H439.52V666.27H440.2V666.27H440.88V666.3H441.56V666.28H442.24V666.32H442.92V666.25H443.6V666.29H444.28V666.29H444.96V666.26H445.64V666.29H446.32V666.27H447.01V666.31H447.69V666.3H448.37V666.32H449.05V666.29H449.73V666.27H450.41V666.28H451.09V666.27H451.77V666.31H452.45V666.31H453.13V666.3H453.81V666.27H454.49V666.27H455.17V666.28H455.85V666.25H456.53V666.25H457.21V666.22H457.89V666.14H458.57V666.12H459.25V666.01H459.93V665.83H460.62V665.71H461.3V665.48H461.98V665.29H462.66V664.89H463.34V664.81H464.02V664.46H464.7V664.19H465.38V663.8H466.06V663.72H466.74V663.69H467.42V663.77H468.1V663.77H468.78V663.98H469.46V664.27H470.14V664.6H470.82V664.87H471.5V665.1H472.18V665.36H472.86V665.61H473.54V665.81H474.23V666.01H474.91V666.07H475.59V666.18H476.27V666.21H476.95V666.24H477.63V666.29H478.31V666.32H478.99V666.28H479.67V666.3H480.35V666.33H481.03V666.39H481.71V666.32H482.39V666.31H483.07V666.3H483.75V666.34H484.43V666.34H485.11V666.34H485.79V666.31H486.47V666.36H487.15V666.33H487.84V666.35H488.52V666.33H489.2V666.37H489.88V666.32H490.56V666.35H491.24V666.34H491.92V666.32H492.6V666.31H493.28V666.37H493.96V666.31H494.64V666.33H495.32V666.35H496V666.31H496.68V666.34H497.36V666.31H498.04V666.35H498.72V666.36H499.4V666.31H500.08V666.29H500.76V666.32H501.45V666.31H502.13V666.34H502.81V666.35H503.49V666.31H504.17V666.25H504.85V666.31H505.53V666.26H506.21V666.27H506.89V666.18H507.57V666.13H508.25V666.15H508.93V666.09H509.61V666.01H510.29V666.03H510.97V666.05H511.65V666.05H512.33V666.07H513.01V666H513.69V666.06H514.37V666.04H515.06V666.08H515.74V666.16H516.42V666.19H517.1V666.19H517.78V666.24H518.46V666.26H519.14V666.33H519.82V666.29H520.5V666.35H521.18V666.39H521.86V666.36H522.54V666.35H523.22V666.31H523.9V666.37H524.58V666.39H525.26V666.32H525.94V666.37H526.62V666.38H527.3V666.39H527.98V666.39H528.67V666.34H529.35V666.38H530.03V666.39H530.71V666.39H531.39V666.34H532.07V666.39H532.75V666.37H533.43V666.38H534.11V666.38H534.79V666.4H535.47V666.37H536.15V666.35H536.83V666.39H537.51V666.41H538.19V666.42H538.87V666.39H539.55V666.4H540.23V666.39H540.91V666.39H541.59V666.42H542.28V666.38H542.96V666.39H543.64V666.4H544.32V666.39H545V666.38H545.68V666.4H546.36V666.42H547.04V666.38H547.72V666.41H548.4V666.42H549.08V666.44H549.76V666.41H550.44V666.43H551.12V666.42H551.8V666.4H552.48V666.41H553.16V666.39H553.84V666.41H554.52V666.42H555.2V666.42H555.89V666.43H556.57V666.41H557.25V666.42H557.93V666.43H558.61V666.41H559.29V666.42H559.97V666.43H560.65V666.45H561.33V666.42H562.01V666.42H562.69V666.43H563.37V666.44H564.05V666.45H564.73V666.44H565.41V666.43H566.09V666.44H566.77V666.44H567.45V666.45H568.13V666.43H568.81V666.43H569.5V666.45H570.18V666.43H570.86V666.43H571.54V666.43H572.22V666.45H572.9V666.45H573.58V666.47H574.26V666.43H574.94V666.49H575.62V666.46H576.3V666.46H576.98V666.43H577.66V666.45H578.34V666.47H579.02V666.48H579.7V666.47H580.38V666.45H581.06V666.45H581.74V666.46H582.42V666.47H583.11V666.46H583.79V666.44H584.47V666.48H585.15V666.46H585.83V666.43H586.51V666.45H587.19V666.47H587.87V666.45H588.55V666.47H589.23V666.46H589.91V666.43H590.59V666.43H591.27V666.49H591.95V666.45H592.63V666.43H593.31V666.48H593.99V666.46H594.67V666.44H595.35V666.48H596.03V666.46H596.72V666.47H597.4V666.5H598.08V666.46H598.76V666.47H599.44V666.45H600.12V666.43H600.8V666.46H601.48V666.48H602.16V666.47H602.84V666.47H603.52V666.46H604.2V666.5H604.88V666.5H605.56V666.51H606.24V666.47H606.92V666.48H607.6V666.49H608.28V666.49H608.96V666.49H609.64V666.5H610.33V666.49H611.01V666.49H611.69V666.46H612.37V666.48H613.05V666.5H613.73V666.49H614.41V666.46H615.09V666.48H615.77V666.48H616.45V666.47H617.13V666.46H617.81V666.51H618.49V666.5H619.17V666.52H619.85V666.48H620.53V666.5H621.21V666.5H621.89V666.5H622.57V666.48H623.25V666.5H623.94V666.5H624.62V666.47H625.3V666.51H625.98V666.52H626.66V666.45H627.34V666.5H628.02V666.51H628.7V666.51H629.38V666.5H630.06V666.49H630.74V666.49H631.42V666.49H632.1V666.51H632.78V666.53H633.46V666.5H634.14V666.48H634.82V666.49H635.5V666.51H636.18V666.49H636.86V666.51H637.55V666.51H638.23V666.53H638.91V666.51H639.59V666.51H640.27V666.51H640.95V666.5H641.63V666.48H642.31V666.49H642.99V666.52H643.67V666.52H644.35V666.52H645.03V666.53H645.71V666.51H646.39V666.51H647.07V666.51H647.75V666.51H648.43V666.51H649.11V666.52H649.79V666.53H650.47V666.49H651.16V666.5H651.84V666.53H652.52V666.53H653.2V666.53H653.88V666.52H654.56V666.5H655.24V666.51H655.92V666.51H656.6V666.51H657.28V666.51H657.96V666.51H658.64V666.52H659.32V666.53H660V666.55H660.68V666.53H661.36V666.5H662.04V666.54H662.72V666.54H663.4V666.51H664.08V666.53H664.77V666.54H665.45V666.51H666.13V666.52H666.81V666.52H667.49V666.54H668.17V666.53H668.85V666.53H669.53V666.52H670.21V666.52H670.89V666.52H671.57V666.54H672.25V666.53H672.93V666.56H673.61V666.53H674.29V666.53H674.97V666.55H675.65V666.55H676.33V666.54H677.01V666.56H677.69V666.54H678.38V666.54H679.06V666.56H679.74V666.54H680.42V666.53H681.1V666.53H681.78V666.53H682.46V666.55H683.14V666.55H683.82V666.55H684.5V666.54H685.18V666.52H685.86V666.53H686.54V666.53H687.22V666.53H687.9V666.58H688.58V666.56H689.26V666.56H689.94V666.54H690.62V666.53H691.3V666.57H691.99V666.56H692.67V666.55H693.35V666.56H694.03V666.57H694.71V666.57H695.39V666.55H696.07V666.57H696.75V666.54H697.43V666.56H698.11V666.55H698.79V666.54H699.47V666.57H700.15V666.58H700.83V666.56H701.51V666.58H702.19V666.58H702.87V666.57H703.55V666.56H704.23V666.58H704.91V666.57H705.6V666.56H706.28V666.55H706.96V666.6H707.64V666.55H708.32V666.56H709V666.59H709.68V666.59H710.36V666.57H711.04V666.58H711.72V666.57H712.4V666.56H713.08V666.58H713.76V666.57H714.44V666.57H715.12V666.56H715.8V666.55H716.48V666.55H717.16V666.57H717.84V666.58H718.52V666.55H719.21V666.57H719.89V666.57H720.57V666.59H721.25V666.57H721.93V666.59H722.61V666.58H723.29V666.6H723.97V666.59H724.65V666.58H725.33V666.6H726.01V666.59H726.69V666.58H727.37V666.6H728.05V666.6H728.73V666.59H729.41V666.6H730.09V666.57H730.77V666.59H731.45V666.57H732.13V666.57H732.82V666.6H733.5V666.58H734.18V666.59H734.86V666.6H735.54V666.59H736.22V666.59H736.9V666.57H737.58V666.57H738.26V666.6H738.94V666.59H739.62V666.58H740.3V666.57H740.98V666.61H741.66V666.57H742.34V666.59H743.02V666.57H743.7V666.59H744.38V666.6H745.06V666.58H745.74V666.57H746.43V666.59H747.11V666.62H747.79V666.58H748.47V666.61H749.15V666.6H749.83V666.6H750.51V666.61H751.19V666.6H751.87V666.6H752.55V666.6H753.23V666.59H753.91V666.59H754.59V666.61H755.27V666.59H755.95V666.58H756.63V666.58H757.31V666.59H757.99V666.58H758.67V666.58H759.35V666.57H760.04V666.57H760.72V666.59H761.4V666.59H762.08V666.57H762.76V666.57H763.44V666.57H764.12V666.62H764.8V666.59H765.48V666.63H766.16V666.58H766.84V666.59H767.52V666.59H768.2V666.59H768.88V666.58H769.56V666.6H770.24V666.58H770.92V666.59H771.6V666.59H772.28V666.59H772.96V666.59H773.65V666.61H774.33V666.59H775.01V666.59H775.69V666.6H776.37V666.59H777.05V666.58H777.73V666.61H778.41V666.6H779.09V666.6H779.77V666.61H780.45V666.59H781.13V666.61H781.81V666.6H782.49V666.59H783.17V666.59H783.85V666.59H784.53V666.57H785.21V666.6H785.89V666.59H786.57V666.61H787.26V666.59H787.94V666.58H788.62V666.58H789.3V666.61H789.98V666.6H790.66V666.58H791.34V666.6H792.02V666.59H792.7V666.61H793.38V666.58H794.06V666.59H794.74V666.59H795.42V666.61H796.1V666.6H796.78V666.6H797.46V666.6H798.14V666.6H798.82V666.6H799.5V666.6H800.18V666.59H800.87V666.63H801.55V666.62H802.23V666.62H802.91V666.61H803.59V666.62H804.27V666.6H804.95V666.6H805.63V666.61H806.31V666.61H806.99V666.6H807.67V666.6H808.35V666.6H809.03V666.61H809.71V666.6H810.39V666.62H811.07V666.59H811.75V666.64H812.43V666.61H813.11V666.62H813.79V666.6H814.48V666.62H815.16V666.59H815.84V666.62H816.52V666.58H817.2V666.6H817.88V666.61H818.56V666.6H819.24V666.58H819.92V666.6H820.6V666.63H821.28V666.6H821.96V666.61H822.64V666.63H823.32V666.6H824V666.62H824.68V666.61H825.36V666.61H826.04V666.62H826.72V666.6H827.4V666.62H828.09V666.61H828.77V666.62H829.45V666.61H830.13V666.59H830.81V666.61H831.49V666.62H832.17V666.61H832.85V666.62H833.53V666.61H834.21V666.61H834.89V666.61H835.57V666.61H836.25V666.62H836.93V666.61H837.61V666.6H838.29V666.62H838.97V666.61H839.65V666.61H840.33V666.6H841.01V666.6H841.7V666.62H842.38V666.61H843.06V666.63H843.74V666.63H844.42V666.62H845.1V666.61H845.78V666.61H846.46V666.62H847.14V666.63H847.82V666.61H848.5V666.62H849.18V666.61H849.86V666.62H850.54V666.61H851.22V666.61H851.9V666.61H852.58V666.62H853.26V666.61H853.94V666.62H854.62V666.62H855.31V666.6H855.99V666.62H856.67V666.63H857.35V666.6H858.03V666.61H858.71V666.61H859.39V666.62H860.07V666.62H860.75V666.62H861.43V666.63H862.11V666.61H862.79V666.63H863.47V666.63H864.15V666.63H864.83V666.6H865.51V666.61H866.19V666.63H866.87V666.62H867.55V666.62H868.23V666.61H868.92V666.64H869.6V666.61H870.28V666.63H870.96V666.63H871.64V666.63H872.32V666.62H873V666.61H873.68V666.62H874.36V666.62H875.04V666.63H875.72V666.62H876.4V666.62H877.08V666.64H877.76V666.63H878.44V666.62H879.12V666.64H879.8V666.63H880.48V666.62H881.16V666.64H881.84V666.63H882.53V666.63H883.21V666.62H883.89V666.64H884.57V666.62H885.25V666.63H885.93V666.62H886.61V666.62H887.29V666.63H887.97V666.62H888.65V666.65H889.33V666.64H890.01V666.64H890.69V666.63H891.37V666.62H892.05V666.65H892.73V666.63H893.41V666.64H894.09V666.65H894.77V666.62H895.45V666.63H896.14V666.62H896.82V666.62H897.5V666.64H898.18V666.65H898.86V666.61H899.54V666.64H900.22V666.64H900.9V666.63H901.58V666.63H902.26V666.64H902.94V666.64H903.62V666.63H904.3V666.63H904.98V666.63H905.66V666.64H906.34V666.64H907.02V666.63H907.7V666.63H908.38V666.63H909.06V666.64H909.75V666.64H910.43V666.65H911.11V666.62H911.79V666.65H912.47V666.63H913.15V666.65H913.83V666.63H914.51V666.63H915.19V666.65H915.87V666.64H916.55V666.65H917.23V666.63H917.91V666.64H918.59V666.65H919.27V666.65H919.95V666.63H920.63V666.63H921.31V666.63H921.99V666.65H922.67V666.64H923.36V666.63H924.04V666.65H924.72V666.64H925.4V666.65H926.08V666.65H926.76V666.63H927.44V666.64H928.12V666.64H928.8V666.64H929.48V666.63H930.16V666.63H930.84V666.64H931.52V666.65H932.2V666.65H932.88V666.63H933.56V666.65H934.24V666.66H934.92V666.65H935.6V666.64H936.28V666.64H936.97V666.64H937.65V666.65H938.33V666.65H939.01V666.65H939.69V666.66H940.37V666.65H941.05V666.64H941.73V666.65H942.41V666.66H943.09V666.66H943.77V666.64H944.45V666.66H945.13V666.64H945.81V666.64H946.49V666.65H947.17V666.66H947.85V666.65H948.53V666.66H949.21V666.65H949.89V666.65H950.58V666.65H951.26V666.65H951.94V666.65H952.62V666.66H953.3V666.65H953.98V666.65H954.66V666.67H955.34V666.65H956.02V666.65H956.7V666.66H957.38V666.67H958.06V666.64H958.74V666.65H959.42V666.65H960.1V666.65H960.78V666.66H961.46V666.65H962.14V666.66H962.82V666.63H963.5V666.66H964.19V666.65H964.87V666.67H965.55V666.66H966.23V666.66H966.91V666.65H967.59V666.65H968.27V666.65H968.95V666.67H969.63V666.65H970.31V666.66H970.99V666.64H971.67V666.64H972.35V666.65H973.03V666.65H973.71V666.67H974.39V666.64H975.07V666.65H975.75V666.65H976.43V666.66H977.11V666.66H977.8V666.67H978.48V666.66H979.16V666.66H979.84V666.66H980.52V666.65H981.2V666.65H981.88V666.66H982.56V666.66H983.24V666.64H983.92V666.66H984.6V666.65H985.28V666.67H985.96V666.67H986.64V666.66H987.32V666.66H988V666.64H988.68V666.64H989.36V666.67H990.04V666.67H990.72V666.66H991.41V666.65H992.09V666.65H992.77V666.66H993.45V666.67H994.13V666.67H994.81V666.68H995.49V666.67H996.17V666.66H996.85V666.66H997.53V666.67H998.21V666.66H998.89V666.65H999.57V666.66H1000.25V666.67H1000.93V666.66H1001.61V666.66H1002.29V666.66H1002.97V666.67H1003.65V666.67H1004.33V666.66H1005.02V666.67H1005.7V666.66H1006.38V666.67H1007.06V666.67H1007.74V666.67H1008.42V666.68H1009.1V666.68H1009.78V666.69H1010.46V666.7H1011.14V666.69H1011.82V666.7H1012.5V666.7H1013.18V666.7H1013.86V666.7H1014.54V666.7H1015.22V666.7H1015.9V666.7H1016.58V666.7H1017.26V666.7H1017.94V666.7H1018.63V666.7H1019.31V666.7H1019.99V666.7H1020.67V666.7H1021.35V666.7H1022.03V666.7H1022.71V666.7H1023.39V666.7H1024.07V666.7H1024.75V666.7H1025.43V666.7H1026.11V666.7H1026.79V666.7H1027.47V666.7H1028.15V666.7H1028.83V666.7H1029.51V666.7H1030.19V666.7H1030.87V666.7H1031.55V666.7H1032.24V666.7H1032.92V666.7H1033.6V666.7H1034.28V666.7H1034.96V666.7H1035.64V666.7H1036.32V666.7H1037V666.7H1037.68V666.7H1038.36V666.7H1039.04V666.7H1039.72V666.7H1040.4V666.7H1041.08V666.7H1041.76V666.7H1042.44V666.7H1043.12V666.7H1043.8V666.7H1044.48V666.7H1045.16V666.7H1045.85V666.7H1046.53V666.7H1047.21V666.7H1047.89V666.7H1048.57V666.7H1049.25V666.7H1049.93V666.7H1050.61V666.7H1051.29V666.7H1051.97V666.7H1052.65V666.7H1053.33V666.7H1054.01V666.7H1054.69V666.7H1055.37V666.7H1056.05V666.7H1056.73V666.7H1057.41V666.7H1058.09V666.7H1058.77V666.7H1059.46V666.7H1060.14V666.7H1060.82V666.7H1061.5V666.7H1062.18V666.7H1062.86V666.7H1063.54V666.7H1064.22V666.7H1064.9V666.7H1065.58V666.7H1066.26V666.7H1066.94V666.7H1067.62V666.7H1068.3V666.7H1068.98V666.7H1069.66V666.7H1070.34V666.7H1071.02V666.7H1071.7V666.7H1072.38V666.7H1073V666.7H1073V666.7H1073V666.7H1073V666.7H1073V666.7H1073V666.7H1073V666.7H1073V666.7H1073V666.7H1073V666.7H1073V666.7Z" fill="#9b0000"/>
<path d="M16 666.7V666.7H15.57V666.7H16.25V666.7H16.93V666.7H17.61V666.7H18.29V666.7H18.97V666.7H19.65V666.7H20.33V666.7H21.01V666.7H21.69V666.7H22.37V666.7H23.05V666.7H23.73V666.7H24.41V666.7H25.1V666.7H25.78V666.7H26.46V666.7H27.14V666.7H27.82V666.7H28.5V666.7H29.18V666.7H29.86V666.7H30.54V666.7H31.22V666.7H31.9V666.7H32.58V666.7H33.26V666.7H33.94V666.7H34.62V666.7H35.3V666.7H35.98V666.7H36.66V666.7H37.34V666.7H38.02V666.7H38.71V666.7H39.39V666.7H40.07V666.7H40.75V666.7H41.43V666.7H42.11V666.7H42.79V666.7H43.47V666.7H44.15V666.7H44.83V666.7H45.51V666.46H46.19V665.85H46.87V664.92H47.55V664.18H48.23V663.4H48.91V662.59H49.59V662.3H50.27V662.12H50.95V662.14H51.63V662.2H52.32V662.24H53V662.36H53.68V662.24H54.36V662.31H55.04V662.24H55.72V662.39H56.4V662.48H57.08V662.27H57.76V662.05H58.44V662.13H59.12V662.08H59.8V661.99H60.48V661.81H61.16V661.41H61.84V660.77H62.52V659.08H63.2V656.39H63.88V651H64.56V642.43H65.24V631.59H65.93V620.7H66.61V611.86H67.29V608.57H67.97V612.35H68.65V621.79H69.33V632.87H70.01V644.07H70.69V652.95H71.37V658.82H72.05V661.9H72.73V663.46H73.41V664.08H74.09V664.17H74.77V664.09H75.45V663.88H76.13V663.43H76.81V662.79H77.49V662.1H78.17V661.4H78.85V660.94H79.54V660.72H80.22V660.75H80.9V661.46H81.58V662.34H82.26V663.16H82.94V663.89H83.62V664.36H84.3V664.73H84.98V665.03H85.66V665.04H86.34V665.13H87.02V665.06H87.7V665.12H88.38V665.05H89.06V665.15H89.74V665.13H90.42V665.1H91.1V665.06H91.78V665.08H92.46V665.16H93.15V665.08H93.83V665.06H94.51V665.06H95.19V665.04H95.87V664.9H96.55V664.96H97.23V664.93H97.91V664.77H98.59V664.68H99.27V664.53H99.95V664.29H100.63V664.09H101.31V663.92H101.99V663.75H102.67V663.76H103.35V663.87H104.03V663.97H104.71V664.13H105.39V664.23H106.07V664.41H106.76V664.5H107.44V664.39H108.12V664.41H108.8V664.29H109.48V663.8H110.16V663.15H110.84V661.65H111.52V659.27H112.2V655.43H112.88V649.88H113.56V642.73H114.24V634.96H114.92V627.98H115.6V622.85H116.28V621.48H116.96V623.14H117.64V628.84H118.32V635.71H119V643.26H119.68V650.15H120.37V655.53H121.05V659.66H121.73V661.79H122.41V663.09H123.09V663.78H123.77V664.21H124.45V664.25H125.13V664.16H125.81V664.23H126.49V663.78H127.17V663.08H127.85V662.07H128.53V660.18H129.21V657.92H129.89V654.98H130.57V652.02H131.25V649.43H131.93V648.17H132.61V648.16H133.29V650.04H133.98V652.53H134.66V655.41H135.34V658.34H136.02V660.84H136.7V662.33H137.38V663.46H138.06V663.99H138.74V664.29H139.42V664.35H140.1V664.42H140.78V664.45H141.46V664.2H142.14V663.58H142.82V662.64H143.5V660.59H144.18V657.31H144.86V652.1H145.54V644.07H146.22V634.4H146.9V623.17H147.59V610.53H148.27V602.16H148.95V595.86H149.63V595.47H150.31V600.72H150.99V610.38H151.67V621H152.35V633.06H153.03V643.02H153.71V650.56H154.39V655.73H155.07V659.1H155.75V660.96H156.43V662.11H157.11V662.7H157.79V663.21H158.47V663.54H159.15V663.85H159.83V664.25H160.51V664.5H161.2V664.79H161.88V664.96H162.56V665.05H163.24V665.14H163.92V665.16H164.6V665.22H165.28V665.18H165.96V665.28H166.64V665.3H167.32V665.36H168V665.32H168.68V665.3H169.36V665.36H170.04V665.34H170.72V665.31H171.4V665.35H172.08V665.37H172.76V665.31H173.44V665.35H174.12V665.34H174.81V665.31H175.49V665.31H176.17V665.37H176.85V665.37H177.53V665.33H178.21V665.33H178.89V665.39H179.57V665.23H180.25V665.26H180.93V665.2H181.61V665.25H182.29V665.11H182.97V665.17H183.65V665.12H184.33V665.17H185.01V665.11H185.69V665.12H186.37V665.14H187.05V665.13H187.73V665.18H188.42V665.18H189.1V665.28H189.78V665.35H190.46V665.34H191.14V665.34H191.82V665.34H192.5V665.39H193.18V665.51H193.86V665.44H194.54V665.41H195.22V665.47H195.9V665.5H196.58V665.48H197.26V665.52H197.94V665.47H198.62V665.51H199.3V665.45H199.98V665.49H200.66V665.55H201.34V665.5H202.03V665.49H202.71V665.55H203.39V665.54H204.07V665.62H204.75V665.49H205.43V665.54H206.11V665.61H206.79V665.59H207.47V665.53H208.15V665.49H208.83V665.52H209.51V665.5H210.19V665.56H210.87V665.57H211.55V665.48H212.23V665.49H212.91V665.51H213.59V665.46H214.27V665.55H214.95V665.53H215.64V665.47H216.32V665.44H217V665.51H217.68V665.44H218.36V665.53H219.04V665.49H219.72V665.51H220.4V665.57H221.08V665.49H221.76V665.47H222.44V665.51H223.12V665.51H223.8V665.45H224.48V665.55H225.16V665.56H225.84V665.53H226.52V665.55H227.2V665.44H227.88V665.49H228.56V665.53H229.25V665.52H229.93V665.38H230.61V665.52H231.29V665.53H231.97V665.48H232.65V665.47H233.33V665.48H234.01V665.53H234.69V665.54H235.37V665.47H236.05V665.49H236.73V665.56H237.41V665.45H238.09V665.47H238.77V665.51H239.45V665.52H240.13V665.5H240.81V665.54H241.49V665.57H242.17V665.5H242.86V665.58H243.54V665.51H244.22V665.58H244.9V665.53H245.58V665.54H246.26V665.46H246.94V665.58H247.62V665.6H248.3V665.57H248.98V665.59H249.66V665.57H250.34V665.54H251.02V665.53H251.7V665.49H252.38V665.59H253.06V665.46H253.74V665.49H254.42V665.58H255.1V665.66H255.78V665.58H256.47V665.58H257.15V665.67H257.83V665.58H258.51V665.6H259.19V665.62H259.87V665.57H260.55V665.56H261.23V665.62H261.91V665.59H262.59V665.63H263.27V665.64H263.95V665.6H264.63V665.59H265.31V665.63H265.99V665.7H266.67V665.59H267.35V665.67H268.03V665.61H268.71V665.54H269.39V665.61H270.08V665.65H270.76V665.65H271.44V665.53H272.12V665.55H272.8V665.46H273.48V665.34H274.16V665.2H274.84V664.92H275.52V664.49H276.2V663.95H276.88V662.9H277.56V661.54H278.24V660H278.92V658.17H279.6V656.35H280.28V654.51H280.96V652.88H281.64V652.04H282.32V651.49H283V651.89H283.69V652.37H284.37V653.89H285.05V655.57H285.73V657.33H286.41V659.24H287.09V661.01H287.77V662.33H288.45V663.57H289.13V664.25H289.81V664.82H290.49V665.27H291.17V665.37H291.85V665.59H292.53V665.62H293.21V665.71H293.89V665.68H294.57V665.68H295.25V665.76H295.93V665.77H296.61V665.69H297.3V665.6H297.98V665.57H298.66V665.48H299.34V665.29H300.02V665.27H300.7V664.98H301.38V664.81H302.06V664.51H302.74V664.38H303.42V664.26H304.1V664.13H304.78V664.18H305.46V664.15H306.14V664.32H306.82V664.48H307.5V664.71H308.18V664.86H308.86V665.13H309.54V665.31H310.22V665.48H310.91V665.68H311.59V665.73H312.27V665.82H312.95V665.88H313.63V665.95H314.31V665.98H314.99V665.96H315.67V665.93H316.35V666.04H317.03V666.01H317.71V666.04H318.39V666.01H319.07V666.02H319.75V666.01H320.43V666.13H321.11V666.06H321.79V666.08H322.47V666.06H323.15V666.08H323.83V666.08H324.52V666.04H325.2V666.01H325.88V666.15H326.56V666.08H327.24V666.06H327.92V666.08H328.6V666.09H329.28V666.12H329.96V666.11H330.64V666.07H331.32V666.06H332V666.09H332.68V666.12H333.36V666.1H334.04V666.11H334.72V666.09H335.4V666.11H336.08V666.13H336.76V666.11H337.44V666.15H338.13V666.1H338.81V666.09H339.49V666.15H340.17V666.11H340.85V666.15H341.53V666.09H342.21V666.1H342.89V666.13H343.57V666.1H344.25V666.14H344.93V666.15H345.61V666.15H346.29V666.14H346.97V666.14H347.65V666.13H348.33V666.15H349.01V666.11H349.69V666.11H350.37V666.15H351.05V666.18H351.74V666.12H352.42V666.11H353.1V666.15H353.78V666.18H354.46V666.14H355.14V666.1H355.82V666.2H356.5V666.13H357.18V666.16H357.86V666.17H358.54V666.14H359.22V666.19H359.9V666.14H360.58V666.12H361.26V666.15H361.94V666.18H362.62V666.21H363.3V666.19H363.98V666.21H364.66V666.12H365.35V666.17H366.03V666.19H366.71V666.2H367.39V666.19H368.07V666.17H368.75V666.2H369.43V666.12H370.11V666.19H370.79V666.19H371.47V666.16H372.15V666.13H372.83V666.14H373.51V666.19H374.19V666.17H374.87V666.17H375.55V666.16H376.23V666.17H376.91V666.21H377.59V666.22H378.27V666.18H378.96V666.22H379.64V666.15H380.32V666.19H381V666.22H381.68V666.2H382.36V666.21H383.04V666.2H383.72V666.17H384.4V666.24H385.08V666.25H385.76V666.19H386.44V666.21H387.12V666.2H387.8V666.19H388.48V666.21H389.16V666.19H389.84V666.23H390.52V666.21H391.2V666.23H391.88V666.24H392.57V666.2H393.25V666.2H393.93V666.27H394.61V666.25H395.29V666.21H395.97V666.19H396.65V666.24H397.33V666.23H398.01V666.26H398.69V666.16H399.37V666.22H400.05V666.21H400.73V666.21H401.41V666.21H402.09V666.22H402.77V666.24H403.45V666.22H404.13V666.24H404.81V666.21H405.49V666.26H406.18V666.26H406.86V666.23H407.54V666.21H408.22V666.24H408.9V666.26H409.58V666.25H410.26V666.26H410.94V666.2H411.62V666.23H412.3V666.22H412.98V666.24H413.66V666.26H414.34V666.22H415.02V666.21H415.7V666.24H416.38V666.25H417.06V666.23H417.74V666.26H418.42V666.24H419.1V666.28H419.79V666.28H420.47V666.25H421.15V666.25H421.83V666.21H422.51V666.27H423.19V666.26H423.87V666.29H424.55V666.31H425.23V666.31H425.91V666.25H426.59V666.3H427.27V666.24H427.95V666.23H428.63V666.28H429.31V666.23H429.99V666.27H430.67V666.24H431.35V666.28H432.03V666.25H432.71V666.3H433.4V666.26H434.08V666.29H434.76V666.28H435.44V666.26H436.12V666.27H436.8V666.28H437.48V666.26H438.16V666.26H438.84V666.31H439.52V666.27H440.2V666.27H440.88V666.3H441.56V666.28H442.24V666.32H442.92V666.25H443.6V666.29H444.28V666.29H444.96V666.26H445.64V666.29H446.32V666.27H447.01V666.31H447.69V666.3H448.37V666.32H449.05V666.29H449.73V666.27H450.41V666.28H451.09V666.27H451.77V666.31H452.45V666.31H453.13V666.3H453.81V666.27H454.49V666.27H455.17V666.28H455.85V666.25H456.53V666.25H457.21V666.22H457.89V666.14H458.57V666.12H459.25V666.01H459.93V665.83H460.62V665.71H461.3V665.48H461.98V665.29H462.66V664.89H463.34V664.81H464.02V664.46H464.7V664.19H465.38V663.8H466.06V663.72H466.74V663.69H467.42V663.77H468.1V663.77H468.78V663.98H469.46V664.27H470.14V664.6H470.82V664.87H471.5V665.1H472.18V665.36H472.86V665.61H473.54V665.81H474.23V666.01H474.91V666.07H475.59V666.18H476.27V666.21H476.95V666.24H477.63V666.29H478.31V666.32H478.99V666.28H479.67V666.3H480.35V666.33H481.03V666.39H481.71V666.32H482.39V666.31H483.07V666.3H483.75V666.34H484.43V666.34H485.11V666.34H485.79V666.31H486.47V666.36H487.15V666.33H487.84V666.35H488.52V666.33H489.2V666.37H489.88V666.32H490.56V666.35H491.24V666.34H491.92V666.32H492.6V666.31H493.28V666.37H493.96V666.31H494.64V666.33H495.32V666.35H496V666.31H496.68V666.34H497.36V666.31H498.04V666.35H498.72V666.36H499.4V666.31H500.08V666.29H500.76V666.32H501.45V666.31H502.13V666.34H502.81V666.35H503.49V666.31H504.17V666.25H504.85V666.31H505.53V666.26H506.21V666.27H506.89V666.18H507.57V666.13H508.25V666.15H508.93V666.09H509.61V666.01H510.29V666.03H510.97V666.05H511.65V666.05H512.33V666.07H513.01V666H513.69V666.06H514.37V666.04H515.06V666.08H515.74V666.16H516.42V666.19H517.1V666.19H517.78V666.24H518.46V666.26H519.14V666.33H519.82V666.29H520.5V666.35H521.18V666.39H521.86V666.36H522.54V666.35H523.22V666.31H523.9V666.37H524.58V666.39H525.26V666.32H525.94V666.37H526.62V666.38H527.3V666.39H527.98V666.39H528.67V666.34H529.35V666.38H530.03V666.39H530.71V666.39H531.39V666.34H532.07V666.39H532.75V666.37H533.43V666.38H534.11V666.38H534.79V666.4H535.47V666.37H536.15V666.35H536.83V666.39H537.51V666.41H538.19V666.42H538.87V666.39H539.55V666.4H540.23V666.39H540.91V666.39H541.59V666.42H542.28V666.38H542.96V666.39H543.64V666.4H544.32V666.39H545V666.38H545.68V666.4H546.36V666.42H547.04V666.38H547.72V666.41H548.4V666.42H549.08V666.44H549.76V666.41H550.44V666.43H551.12V666.42H551.8V666.4H552.48V666.41H553.16V666.39H553.84V666.41H554.52V666.42H555.2V666.42H555.89V666.43H556.57V666.41H557.25V666.42H557.93V666.43H558.61V666.41H559.29V666.42H559.97V666.43H560.65V666.45H561.33V666.42H562.01V666.42H562.69V666.43H563.37V666.44H564.05V666.45H564.73V666.44H565.41V666.43H566.09V666.44H566.77V666.44H567.45V666.45H568.13V666.43H568.81V666.43H569.5V666.45H570.18V666.43H570.86V666.43H571.54V666.43H572.22V666.45H572.9V666.45H573.58V666.47H574.26V666.43H574.94V666.49H575.62V666.46H576.3V666.46H576.98V666.43H577.66V666.45H578.34V666.47H579.02V666.48H579.7V666.47H580.38V666.45H581.06V666.45H581.74V666.46H582.42V666.47H583.11V666.46H583.79V666.44H584.47V666.48H585.15V666.46H585.83V666.43H586.51V666.45H587.19V666.47H587.87V666.45H588.55V666.47H589.23V666.46H589.91V666.43H590.59V666.43H591.27V666.49H591.95V666.45H592.63V666.43H593.31V666.48H593.99V666.46H594.67V666.44H595.35V666.48H596.03V666.46H596.72V666.47H597.4V666.5H598.08V666.46H598.76V666.47H599.44V666.45H600.12V666.43H600.8V666.46H601.48V666.48H602.16V666.47H602.84V666.47H603.52V666.46H604.2V666.5H604.88V666.5H605.56V666.51H606.24V666.47H606.92V666.48H607.6V666.49H608.28V666.49H608.96V666.49H609.64V666.5H610.33V666.49H611.01V666.49H611.69V666.46H612.37V666.48H613.05V666.5H613.73V666.49H614.41V666.46H615.09V666.48H615.77V666.48H616.45V666.47H617.13V666.46H617.81V666.51H618.49V666.5H619.17V666.52H619.85V666.48H620.53V666.5H621.21V666.5H621.89V666.5H622.57V666.48H623.25V666.5H623.94V666.5H624.62V666.47H625.3V666.51H625.98V666.52H626.66V666.45H627.34V666.5H628.02V666.51H628.7V666.51H629.38V666.5H630.06V666.49H630.74V666.49H631.42V666.49H632.1V666.51H632.78V666.53H633.46V666.5H634.14V666.48H634.82V666.49H635.5V666.51H636.18V666.49H636.86V666.51H637.55V666.51H638.23V666.53H638.91V666.51H639.59V666.51H640.27V666.51H640.95V666.5H641.63V666.48H642.31V666.49H642.99V666.52H643.67V666.52H644.35V666.52H645.03V666.53H645.71V666.51H646.39V666.51H647.07V666.51H647.75V666.51H648.43V666.51H649.11V666.52H649.79V666.53H650.47V666.49H651.16V666.5H651.84V666.53H652.52V666.53H653.2V666.53H653.88V666.52H654.56V666.5H655.24V666.51H655.92V666.51H656.6V666.51H657.28V666.51H657.96V666.51H658.64V666.52H659.32V666.53H660V666.55H660.68V666.53H661.36V666.5H662.04V666.54H662.72V666.54H663.4V666.51H664.08V666.53H664.77V666.54H665.45V666.51H666.13V666.52H666.81V666.52H667.49V666.54H668.17V666.53H668.85V666.53H669.53V666.52H670.21V666.52H670.89V666.52H671.57V666.54H672.25V666.53H672.93V666.56H673.61V666.53H674.29V666.53H674.97V666.55H675.65V666.55H676.33V666.54H677.01V666.56H677.69V666.54H678.38V666.54H679.06V666.56H679.74V666.54H680.42V666.53H681.1V666.53H681.78V666.53H682.46V666.55H683.14V666.55H683.82V666.55H684.5V666.54H685.18V666.52H685.86V666.53H686.54V666.53H687.22V666.53H687.9V666.58H688.58V666.56H689.26V666.56H689.94V666.54H690.62V666.53H691.3V666.57H691.99V666.56H692.67V666.55H693.35V666.56H694.03V666.57H694.71V666.57H695.39V666.55H696.07V666.57H696.75V666.54H697.43V666.56H698.11V666.55H698.79V666.54H699.47V666.57H700.15V666.58H700.83V666.56H701.51V666.58H702.19V666.58H702.87V666.57H703.55V666.56H704.23V666.58H704.91V666.57H705.6V666.56H706.28V666.55H706.96V666.6H707.64V666.55H708.32V666.56H709V666.59H709.68V666.59H710.36V666.57H711.04V666.58H711.72V666.57H712.4V666.56H713.08V666.58H713.76V666.57H714.44V666.57H715.12V666.56H715.8V666.55H716.48V666.55H717.16V666.57H717.84V666.58H718.52V666.55H719.21V666.57H719.89V666.57H720.57V666.59H721.25V666.57H721.93V666.59H722.61V666.58H723.29V666.6H723.97V666.59H724.65V666.58H725.33V666.6H726.01V666.59H726.69V666.58H727.37V666.6H728.05V666.6H728.73V666.59H729.41V666.6H730.09V666.57H730.77V666.59H731.45V666.57H732.13V666.57H732.82V666.6H733.5V666.58H734.18V666.59H734.86V666.6H735.54V666.59H736.22V666.59H736.9V666.57H737.58V666.57H738.26V666.6H738.94V666.59H739.62V666.58H740.3V666.57H740.98V666.61H741.66V666.57H742.34V666.59H743.02V666.57H743.7V666.59H744.38V666.6H745.06V666.58H745.74V666.57H746.43V666.59H747.11V666.62H747.79V666.58H748.47V666.61H749.15V666.6H749.83V666.6H750.51V666.61H751.19V666.6H751.87V666.6H752.55V666.6H753.23V666.59H753.91V666.59H754.59V666.61H755.27V666.59H755.95V666.58H756.63V666.58H757.31V666.59H757.99V666.58H758.67V666.58H759.35V666.57H760.04V666.57H760.72V666.59H761.4V666.59H762.08V666.57H762.76V666.57H763.44V666.57H764.12V666.62H764.8V666.59H765.48V666.63H766.16V666.58H766.84V666.59H767.52V666.59H768.2V666.59H768.88V666.58H769.56V666.6H770.24V666.58H770.92V666.59H771.6V666.59H772.28V666.59H772.96V666.59H773.65V666.61H774.33V666.59H775.01V666.59H775.69V666.6H776.37V666.59H777.05V666.58H777.73V666.61H778.41V666.6H779.09V666.6H779.77V666.61H780.45V666.59H781.13V666.61H781.81V666.6H782.49V666.59H783.17V666.59H783.85V666.59H784.53V666.57H785.21V666.6H785.89V666.59H786.57V666.61H787.26V666.59H787.94V666.58H788.62V666.58H789.3V666.61H789.98V666.6H790.66V666.58H791.34V666.6H792.02V666.59H792.7V666.61H793.38V666.58H794.06V666.59H794.74V666.59H795.42V666.61H796.1V666.6H796.78V666.6H797.46V666.6H798.14V666.6H798.82V666.6H799.5V666.6H800.18V666.59H800.87V666.63H801.55V666.62H802.23V666.62H802.91V666.61H803.59V666.62H804.27V666.6H804.95V666.6H805.63V666.61H806.31V666.61H806.99V666.6H807.67V666.6H808.35V666.6H809.03V666.61H809.71V666.6H810.39V666.62H811.07V666.59H811.75V666.64H812.43V666.61H813.11V666.62H813.79V666.6H814.48V666.62H815.16V666.59H815.84V666.62H816.52V666.58H817.2V666.6H817.88V666.61H818.56V666.6H819.24V666.58H819.92V666.6H820.6V666.63H821.28V666.6H821.96V666.61H822.64V666.63H823.32V666.6H824V666.62H824.68V666.61H825.36V666.61H826.04V666.62H826.72V666.6H827.4V666.62H828.09V666.61H828.77V666.62H829.45V666.61H830.13V666.59H830.81V666.61H831.49V666.62H832.17V666.61H832.85V666.62H833.53V666.61H834.21V666.61H834.89V666.61H835.57V666.61H836.25V666.62H836.93V666.61H837.61V666.6H838.29V666.62H838.97V666.61H839.65V666.61H840.33V666.6H841.01V666.6H841.7V666.62H842.38V666.61H843.06V666.63H843.74V666.63H844.42V666.62H845.1V666.61H845.78V666.61H846.46V666.62H847.14V666.63H847.82V666.61H848.5V666.62H849.18V666.61H849.86V666.62H850.54V666.61H851.22V666.61H851.9V666.61H852.58V666.62H853.26V666.61H853.94V666.62H854.62V666.62H855.31V666.6H855.99V666.62H856.67V666.63H857.35V666.6H858.03V666.61H858.71V666.61H859.39V666.62H860.07V666.62H860.75V666.62H861.43V666.63H862.11V666.61H862.79V666.63H863.47V666.63H864.15V666.63H864.83V666.6H865.51V666.61H866.19V666.63H866.87V666.62H867.55V666.62H868.23V666.61H868.92V666.64H869.6V666.61H870.28V666.63H870.96V666.63H871.64V666.63H872.32V666.62H873V666.61H873.68V666.62H874.36V666.62H875.04V666.63H875.72V666.62H876.4V666.62H877.08V666.64H877.76V666.63H878.44V666.62H879.12V666.64H879.8V666.63H880.48V666.62H881.16V666.64H881.84V666.63H882.53V666.63H883.21V666.62H883.89V666.64H884.57V666.62H885.25V666.63H885.93V666.62H886.61V666.62H887.29V666.63H887.97V666.62H888.65V666.65H889.33V666.64H890.01V666.64H890.69V666.63H891.37V666.62H892.05V666.65H892.73V666.63H893.41V666.64H894.09V666.65H894.77V666.62H895.45V666.63H896.14V666.62H896.82V666.62H897.5V666.64H898.18V666.65H898.86V666.61H899.54V666.64H900.22V666.64H900.9V666.63H901.58V666.63H902.26V666.64H902.94V666.64H903.62V666.63H904.3V666.63H904.98V666.63H905.66V666.64H906.34V666.64H907.02V666.63H907.7V666.63H908.38V666.63H909.06V666.64H909.75V666.64H910.43V666.65H911.11V666.62H911.79V666.65H912.47V666.63H913.15V666.65H913.83V666.63H914.51V666.63H915.19V666.65H915.87V666.64H916.55V666.65H917.23V666.63H917.91V666.64H918.59V666.65H919.27V666.65H919.95V666.63H920.63V666.63H921.31V666.63H921.99V666.65H922.67V666.64H923.36V666.63H924.04V666.65H924.72V666.64H925.4V666.65H926.08V666.65H926.76V666.63H927.44V666.64H928.12V666.64H928.8V666.64H929.48V666.63H930.16V666.63H930.84V666.64H931.52V666.65H932.2V666.65H932.88V666.63H933.56V666.65H934.24V666.66H934.92V666.65H935.6V666.64H936.28V666.64H936.97V666.64H937.65V666.65H938.33V666.65H939.01V666.65H939.69V666.66H940.37V666.65H941.05V666.64H941.73V666.65H942.41V666.66H943.09V666.66H943.77V666.64H944.45V666.66H945.13V666.64H945.81V666.64H946.49V666.65H947.17V666.66H947.85V666.65H948.53V666.66H949.21V666.65H949.89V666.65H950.58V666.65H951.26V666.65H951.94V666.65H952.62V666.66H953.3V666.65H953.98V666.65H954.66V666.67H955.34V666.65H956.02V666.65H956.7V666.66H957.38V666.67H958.06V666.64H958.74V666.65H959.42V666.65H960.1V666.65H960.78V666.66H961.46V666.65H962.14V666.66H962.82V666.63H963.5V666.66H964.19V666.65H964.87V666.67H965.55V666.66H966.23V666.66H966.91V666.65H967.59V666.65H968.27V666.65H968.95V666.67H969.63V666.65H970.31V666.66H970.99V666.64H971.67V666.64H972.35V666.65H973.03V666.65H973.71V666.67H974.39V666.64H975.07V666.65H975.75V666.65H976.43V666.66H977.11V666.66H977.8V666.67H978.48V666.66H979.16V666.66H979.84V666.66H980.52V666.65H981.2V666.65H981.88V666.66H982.56V666.66H983.24V666.64H983.92V666.66H984.6V666.65H985.28V666.67H985.96V666.67H986.64V666.66H987.32V666.66H988V666.64H988.68V666.64H989.36V666.67H990.04V666.67H990.72V666.66H991.41V666.65H992.09V666.65H992.77V666.66H993.45V666.67H994.13V666.67H994.81V666.68H995.49V666.67H996.17V666.66H996.85V666.66H997.53V666.67H998.21V666.66H998.89V666.65H999.57V666.66H1000.25V666.67H1000.93V666.66H1001.61V666.66H1002.29V666.66H1002.97V666.67H1003.65V666.67H1004.33V666.66H1005.02V666.67H1005.7V666.66H1006.38V666.67H1007.06V666.67H1007.74V666.67H1008.42V666.68H1009.1V666.68H1009.78V666.69H1010.46V666.7H1011.14V666.69H1011.82V666.7H1012.5V666.7H1013.18V666.7H1013.86V666.7H1014.54V666.7H1015.22V666.7H1015.9V666.7H1016.58V666.7H1017.26V666.7H1017.94V666.7H1018.63V666.7H1019.31V666.7H1019.99V666.7H1020.67V666.7H1021.35V666.7H1022.03V666.7H1022.71V666.7H1023.39V666.7H1024.07V666.7H1024.75V666.7H1025.43V666.7H1026.11V666.7H1026.79V666.7H1027.47V666.7H1028.15V666.7H1028.83V666.7H1029.51V666.7H1030.19V666.7H1030.87V666.7H1031.55V666.7H1032.24V666.7H1032.92V666.7H1033.6V666.7H1034.28V666.7H1034.96V666.7H1035.64V666.7H1036.32V666.7H1037V666.7H1037.68V666.7H1038.36V666.7H1039.04V666.7H1039.72V666.7H1040.4V666.7H1041.08V666.7H1041.76V666.7H1042.44V666.7H1043.12V666.7H1043.8V666.7H1044.48V666.7H1045.16V666.7H1045.85V666.7H1046.53V666.7H1047.21V666.7H1047.89V666.7H1048.57V666.7H1049.25V666.7H1049.93V666.7H1050.61V666.7H1051.29V666.7H1051.97V666.7H1052.65V666.7H1053.33V666.7H1054.01V666.7H1054.69V666.7H1055.37V666.7H1056.05V666.7H1056.73V666.7H1057.41V666.7H1058.09V666.7H1058.77V666.7H1059.46V666.7H1060.14V666.7H1060.82V666.7H1061.5V666.7H1062.18V666.7H1062.86V666.7H1063.54V666.7H1064.22V666.7H1064.9V666.7H1065.58V666.7H1066.26V666.7H1066.94V666.7H1067.62V666.7H1068.3V666.7H1068.98V666.7H1069.66V666.7H1070.34V666.7H1071.02V666.7H1071.7V666.7H1072.38V666.7H1073V666.7H1073V666.7H1073V666.7H1073V666.7H1073V666.7H1073V666.7H1073V666.7H1073V666.7H1073V666.7H1073V666.7H1073V666.7Z" fill="#ff0000" clip-path="url(#cw)"/>
<path d="M16 666.2H1014M1017 666.2h9M1028 666.2h2M1032 666.2h3M1037 666.2h2M1040 666.2h1M1043 666.2h2M1047 666.2h1M1050 666.2h2" stroke="#b40000" stroke-width="1" shape-rendering="crispEdges"/>
<path d="M109.6 666.2H528.4" stroke="#ff0000" stroke-width="1"/>
<path d="M16 593.8H1073" stroke="#000" stroke-width="1.2"/>
<path d="M109.6 593.3V666.7" stroke="#000" stroke-width="1.2"/>
<g font-family="Liberation Sans, Arial, sans-serif" font-size="16" fill="#000">
<text x="32.8" y="607.9" text-anchor="middle">0</text>
<text x="100.99" y="607.9" text-anchor="middle">1</text>
<text x="169.18" y="607.9" text-anchor="middle">2</text>
<text x="237.37" y="607.9" text-anchor="middle">3</text>
<text x="305.56" y="607.9" text-anchor="middle">4</text>
<text x="373.75" y="607.9" text-anchor="middle">5</text>
<text x="441.94" y="607.9" text-anchor="middle">6</text>
<text x="510.13" y="607.9" text-anchor="middle">7</text>
<text x="578.32" y="607.9" text-anchor="middle">8</text>
<text x="646.51" y="607.9" text-anchor="middle">9</text>
<text x="714.7" y="607.9" text-anchor="middle">10</text>
<text x="782.89" y="607.9" text-anchor="middle">11</text>
<text x="851.08" y="607.9" text-anchor="middle">12</text>
<text x="919.27" y="607.9" text-anchor="middle">13</text>
<text x="987.46" y="607.9" text-anchor="middle">14</text>
<text x="1055.65" y="607.9" text-anchor="middle">15</text>
</g>
</svg>
<!-- vertical scrollbar -->
<div class="abs sb" style="left:1074px;top:38px;width:15px;height:629px;"></div>
<svg class="abs" style="left:1074px;top:38px" width="15" height="629"><path d="M5.2 11.6L8.7 7.4L12.2 11.6z" fill="#3c3c3c"/><path d="M4.8 618.9L12.2 618.9L8.5 623.1z" fill="#3c3c3c"/></svg>
<div class="abs thumbv" style="left:1074px;top:81px;width:15px;height:568px;"></div>
<svg class="abs" style="left:1077px;top:360px" width="9" height="10"><path d="M1 2.5h7M1 5.5h7M1 8.5h7" stroke="#fff" stroke-width="1"/><path d="M1 1.5h7M1 4.5h7M1 7.5h7" stroke="#555" stroke-width="1"/></svg>
<!-- horizontal scrollbar -->
<div class="abs sb" style="left:16px;top:667px;width:1058px;height:16px;background:#ececec;border-top:1px solid #fafafa"></div>
<div class="abs" style="left:16px;top:668px;width:16px;height:15px;background:#f1f1f1"></div>
<div class="abs" style="left:1057px;top:668px;width:16px;height:15px;background:#f1f1f1"></div>
<svg class="abs" style="left:16px;top:667px" width="1058" height="16"><path d="M10.1 4.6L5.9 8.3L10.1 12z" fill="#3c3c3c"/><path d="M1047 4.8L1051.2 8.5L1047 12.2z" fill="#3c3c3c"/></svg>
<div class="abs thumbh" style="left:111px;top:668px;width:417px;height:15px;"></div>
<svg class="abs" style="left:314px;top:671px" width="10" height="9"><path d="M2.5 1v7M5.5 1v7M8.5 1v7" stroke="#fff" stroke-width="1"/><path d="M1.5 1v7M4.5 1v7M7.5 1v7" stroke="#555" stroke-width="1"/></svg>
<!-- status labels -->
<div class="abs sunk" style="left:16px;top:688px;width:313px;height:16px;"></div>
<div class="abs sunk" style="left:16px;top:708px;width:313px;height:16px;"></div>
<span class="t" style="left:18.4px;top:690px;transform:scaleX(.869)" id="l1">NBS K-412 mineral glass, Line 79</span>
<span class="t" style="left:18.4px;top:710.5px;transform:scaleX(.892)" id="l2">keV 1.738785, Intensity  5601.53</span>
<!-- buttons -->
<div class="abs btn" style="left:336px;top:688px;width:73px;height:33px;"></div>
<span class="t b" style="left:343.8px;top:696.6px;transform:scaleX(.968)" id="bz">Zoom Full</span>
<div class="abs" style="left:416px;top:688px;width:73px;height:33px;background:#000;"></div>
<div class="abs btn" style="left:417px;top:689px;width:71px;height:31px;background:#008000;border-color:#fff #404040 #404040 #fff;box-shadow:inset -1px -1px 0 #808080;"></div>
<span class="t b" style="left:436.7px;top:697.9px;transform:scaleX(.933)" id="bc">Close</span>
<div class="abs btn" style="left:336px;top:728px;width:153px;height:33px;"></div>
<span class="t" style="left:369.7px;top:736.8px;transform:scaleX(.881)" id="bcp">Copy To Clipboard</span>
<!-- KLM frame -->
<div class="abs" style="left:504px;top:694px;width:320px;height:66px;border:1px solid #a0a0a0;box-shadow:inset 1px 1px 0 #fff,1px 1px 0 #fff;"></div>
<div class="abs" style="left:511px;top:690px;width:79px;height:10px;background:#f0f0f0;"></div>
<span class="t b" style="left:513.7px;top:687.8px;transform:scaleX(.978)" id="kl">KLM Markers</span>
<div class="abs radio" style="left:513px;top:714px;"></div>
<span class="t b" style="left:531.6px;top:712.8px;transform:scaleX(.973)" id="r1">None</span>
<div class="abs radio" style="left:577px;top:714px;"></div>
<div class="abs" style="left:581px;top:718px;width:4px;height:4px;border-radius:50%;background:#000;"></div>
<span class="t b" style="left:595px;top:712.8px;transform:scaleX(.970)" id="r2">Analyzed Elements</span>
<div class="abs radio" style="left:721px;top:713px;background:#f0f0f0;"></div>
<span class="t b" style="left:739.3px;top:712.8px;transform:scaleX(.952);color:#a0a0a0;text-shadow:1px 1px 0 #fff;" id="r3">All Elements</span>
<div class="abs radio" style="left:513px;top:738px;"></div>
<span class="t b" style="left:531.6px;top:736.8px;transform:scaleX(.983)" id="r4">Specific Element</span>
<!-- spinner -->
<div class="abs btn" style="left:672px;top:729px;width:17px;height:12px;"></div>
<div class="abs btn" style="left:672px;top:741px;width:17px;height:12px;"></div>
<svg class="abs" style="left:672px;top:729px" width="17" height="24"><path d="M5 6.5l2.7-3 2.7 3z" fill="#9a9a9a"/><path d="M5 16.5l2.7 3 2.7-3z" fill="#9a9a9a"/></svg>
<!-- combo -->
<div class="abs" style="left:696px;top:728px;width:63px;height:20px;background:#fff;border:1px solid;border-color:#808080 #fff #fff #808080;box-shadow:inset 1px 1px 0 #696969,inset -1px -1px 0 #e3e3e3;"></div>
<span class="t" style="left:699.4px;top:730.5px;color:#686868;transform:scaleX(1)" id="si">Si</span>
<div class="abs btn" style="left:742px;top:730px;width:16px;height:17px;"></div>
<svg class="abs" style="left:742px;top:730px" width="16" height="17"><path d="M4.8 6.8h7.4l-3.7 4z" fill="#9a9a9a"/></svg>
</body>
</html>
